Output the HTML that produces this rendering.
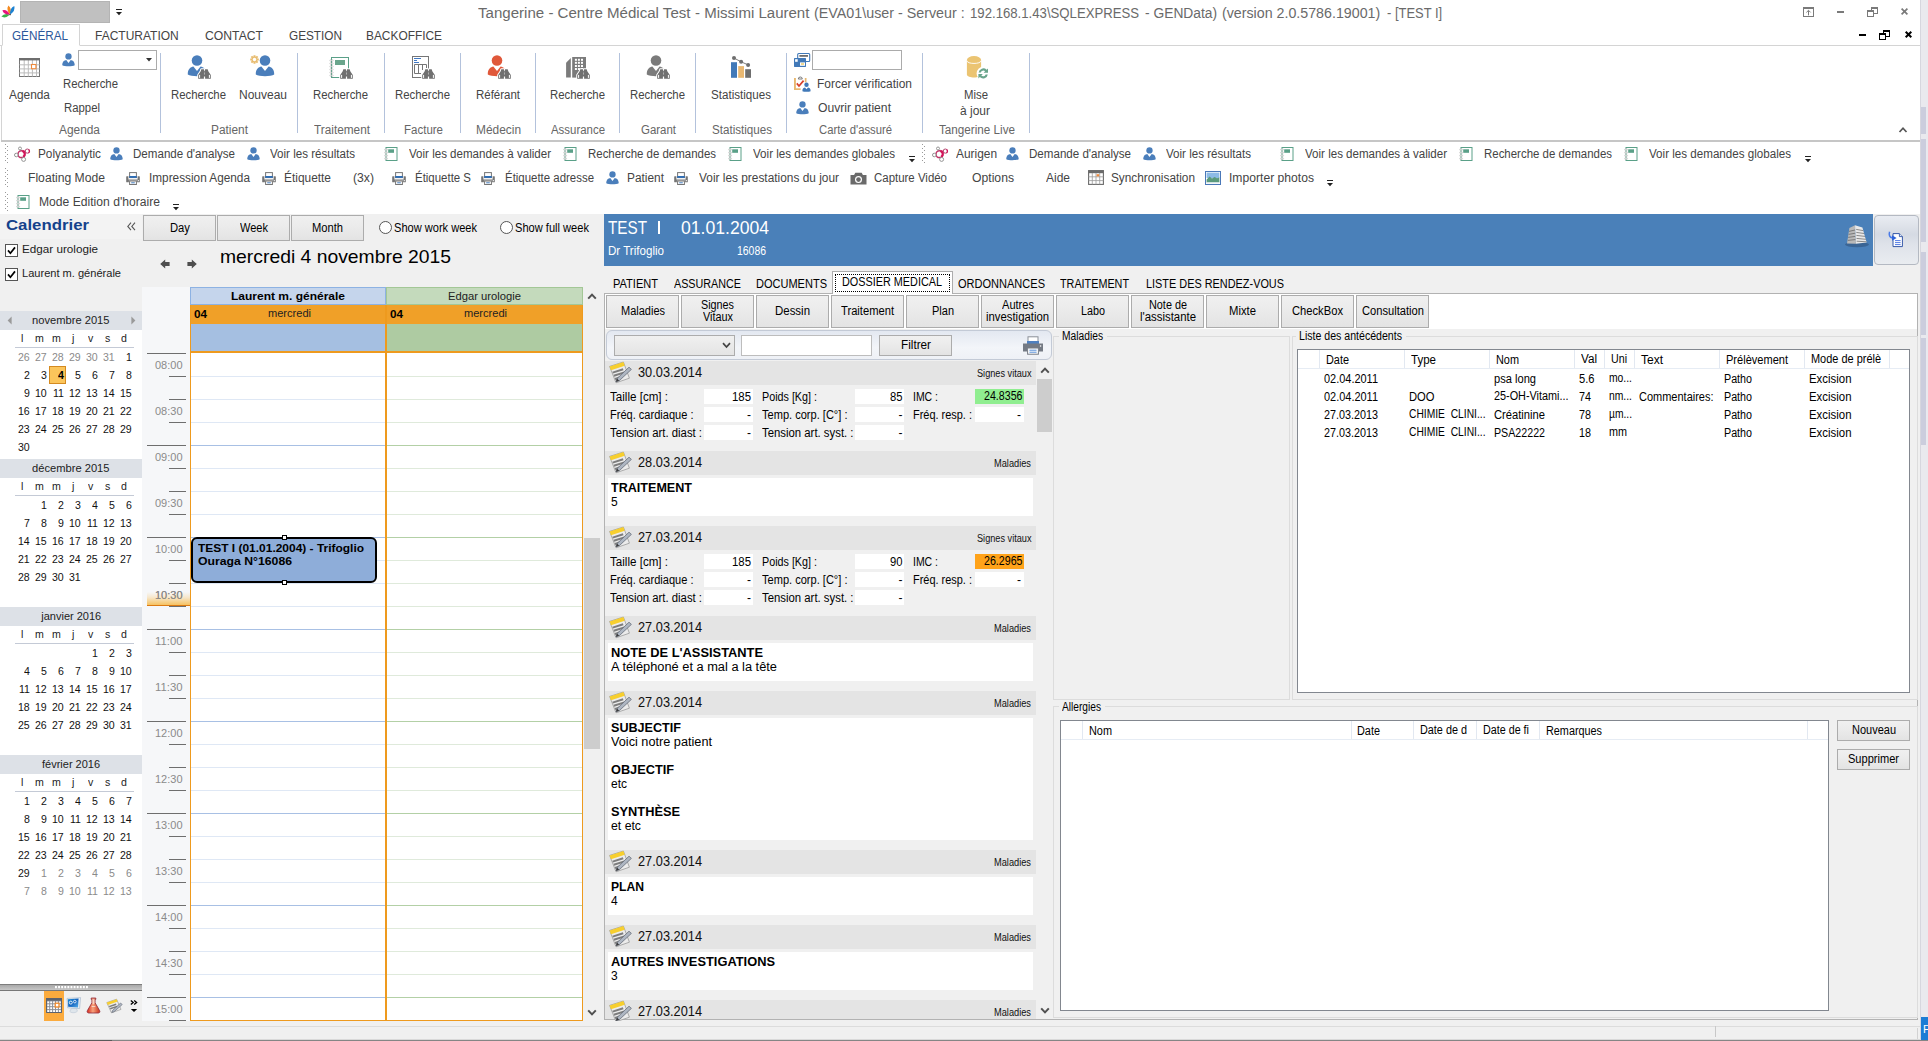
<!DOCTYPE html>
<html><head><meta charset="utf-8"><title>Tangerine</title>
<style>
html,body{margin:0;padding:0;}
body{width:1928px;height:1041px;overflow:hidden;position:relative;background:#fff;font-family:"Liberation Sans",sans-serif;}
div,svg,span.t{position:absolute;}
span.t{white-space:pre;display:block;transform-origin:0 50%;}
svg{overflow:visible;}
</style></head><body>
<div style="left:0px;top:0px;width:1920px;height:214px;background:#fff;"></div><svg style="left:1px;top:4px;" width="14" height="14" viewBox="0 0 14 14"><path d="M9.1 10.6Q2.99 8.72 0.4 12.6Q4.42 14.96 9.1 10.6Z" fill="#3cb44a"/><path d="M9.1 10.6Q6.01 4.92 1.4 6.2Q2.64 10.82 9.1 10.6Z" fill="#e8127c"/><path d="M9.1 10.6Q11.19 4.31 7.4 1.4Q4.90 5.48 9.1 10.6Z" fill="#f58a1f"/><path d="M9.1 10.6Q14.67 6.72 13.3 2.0Q8.74 3.82 9.1 10.6Z" fill="#1d82d2"/><circle cx="9.1" cy="10.6" r="0.8" fill="#444"/></svg><div style="left:20px;top:1px;width:90px;height:22px;background:#c0c0c0;border:1px solid #b4b4b4;box-sizing:border-box;"></div><svg style="left:115px;top:9px;" width="8" height="8" viewBox="0 0 8 8"><rect x="1" y="0" width="6" height="1" fill="#222"/><path d="M1 3h6l-3 3.2z" fill="#222"/></svg><span class="t" style="left:478.10px;top:3px;font-size:15.5px;line-height:19px;color:#6a6a6a;transform:scaleX(0.9723);">Tangerine - Centre Médical Test</span><span class="t" style="left:694.90px;top:3px;font-size:15.5px;line-height:19px;color:#6a6a6a;transform:scaleX(0.9695);">- Missimi Laurent</span><span class="t" style="left:814.30px;top:3px;font-size:15.5px;line-height:19px;color:#6a6a6a;transform:scaleX(0.9224);">(EVA01\user - Serveur :</span><span class="t" style="left:970.20px;top:3px;font-size:15.5px;line-height:19px;color:#6a6a6a;transform:scaleX(0.8495);">192.168.1.43\SQLEXPRESS</span><span class="t" style="left:1145.00px;top:3px;font-size:15.5px;line-height:19px;color:#6a6a6a;transform:scaleX(0.8907);">- GENData)</span><span class="t" style="left:1222.30px;top:3px;font-size:15.5px;line-height:19px;color:#6a6a6a;transform:scaleX(0.9179);">(version 2.0.5786.19001)</span><span class="t" style="left:1387.00px;top:3px;font-size:15.5px;line-height:19px;color:#6a6a6a;transform:scaleX(0.8360);">- [TEST I]</span><div style="left:1803px;top:7px;width:11px;height:10px;border:1px solid #7a7a7a;box-sizing:border-box;border-top:2px solid #7a7a7a;"></div><svg style="left:1805px;top:9px;" width="7" height="7" viewBox="0 0 7 7"><path d="M3.5 6.4V1.6M1.4 3.4L3.5 1.3L5.6 3.4" fill="none" stroke="#7a7a7a" stroke-width="1"/></svg><div style="left:1837px;top:11px;width:7px;height:2px;background:#7a7a7a;"></div><div style="left:1871px;top:7px;width:7px;height:7px;border:1px solid #7a7a7a;box-sizing:border-box;border-top:2px solid #7a7a7a;"></div><div style="left:1867px;top:10px;width:7px;height:7px;background:#fff;border:1px solid #7a7a7a;box-sizing:border-box;border-top:2px solid #7a7a7a;"></div><svg style="left:1901px;top:8px;" width="7" height="7" viewBox="0 0 7 7"><path d="M0.6 0.6L6.4 6.4M6.4 0.6L0.6 6.4" stroke="#7a7a7a" stroke-width="1.7"/></svg><div style="left:1859px;top:34px;width:7px;height:2px;background:#000;"></div><div style="left:1883px;top:30px;width:7px;height:7px;border:1px solid #000;box-sizing:border-box;border-top:2px solid #000;"></div><div style="left:1879px;top:33px;width:7px;height:7px;background:#fff;border:1px solid #000;box-sizing:border-box;border-top:2px solid #000;"></div><svg style="left:1905px;top:31px;" width="7" height="7" viewBox="0 0 7 7"><path d="M0.7 0.7L6.3 6.3M6.3 0.7L0.7 6.3" stroke="#000" stroke-width="2"/></svg><div style="left:0px;top:45px;width:1920px;height:1px;background:#d4d4d4;"></div><div style="left:2px;top:24px;width:78px;height:22px;background:#fff;border:1px solid #d4d4d4;border-bottom:1px solid #fff;box-sizing:border-box;"></div><span class="t" style="left:12.00px;top:28px;font-size:12px;line-height:16px;color:#2b579a;transform:scaleX(0.9765);">GÉNÉRAL</span><span class="t" style="left:95.00px;top:28px;font-size:12px;line-height:16px;color:#444;">FACTURATION</span><span class="t" style="left:205.00px;top:28px;font-size:12px;line-height:16px;color:#444;transform:scaleX(1.0158);">CONTACT</span><span class="t" style="left:289.00px;top:28px;font-size:12px;line-height:16px;color:#444;transform:scaleX(0.9815);">GESTION</span><span class="t" style="left:366.00px;top:28px;font-size:12px;line-height:16px;color:#444;transform:scaleX(0.9912);">BACKOFFICE</span><div style="left:1px;top:46px;width:1px;height:95px;background:#d4d4d4;"></div><div style="left:1px;top:140px;width:1919px;height:2px;background:#c6c6c6;"></div><svg style="left:1898px;top:126px;" width="10" height="8" viewBox="0 0 10 8"><path d="M1.5 6L5 2.2L8.5 6" fill="none" stroke="#555" stroke-width="1.7"/></svg><div style="left:160px;top:53px;width:1px;height:80px;background:#b3c2dc;"></div><div style="left:297px;top:53px;width:1px;height:80px;background:#b3c2dc;"></div><div style="left:384px;top:53px;width:1px;height:80px;background:#b3c2dc;"></div><div style="left:460px;top:53px;width:1px;height:80px;background:#b3c2dc;"></div><div style="left:535px;top:53px;width:1px;height:80px;background:#b3c2dc;"></div><div style="left:619px;top:53px;width:1px;height:80px;background:#b3c2dc;"></div><div style="left:695px;top:53px;width:1px;height:80px;background:#b3c2dc;"></div><div style="left:786px;top:53px;width:1px;height:80px;background:#b3c2dc;"></div><div style="left:922px;top:53px;width:1px;height:80px;background:#b3c2dc;"></div><div style="left:1029px;top:53px;width:1px;height:80px;background:#b3c2dc;"></div><svg style="left:19px;top:58px;" width="21" height="19" viewBox="0 0 21 19"><rect x="0.5" y="0.5" width="20" height="18" fill="#fff" stroke="#767676" stroke-width="1"/><rect x="4.7" y="2" width="1" height="16.5" fill="#bcbcbc"/><rect x="8.8" y="2" width="1" height="16.5" fill="#bcbcbc"/><rect x="12.9" y="2" width="1" height="16.5" fill="#bcbcbc"/><rect x="17.0" y="2" width="1" height="16.5" fill="#bcbcbc"/><rect x="0.5" y="6.3" width="20" height="1" fill="#bcbcbc"/><rect x="0.5" y="10.4" width="20" height="1" fill="#bcbcbc"/><rect x="0.5" y="14.4" width="20" height="1" fill="#bcbcbc"/><rect x="0" y="0" width="21" height="2.4" fill="#6e6e6e"/><rect x="12.5" y="6.5" width="4.4" height="4.2" fill="#fff" stroke="#f08a3c" stroke-width="1.1"/></svg><span class="t" style="left:9.00px;top:87px;font-size:12.5px;line-height:16px;color:#444;transform:scaleX(0.9507);">Agenda</span><svg style="left:61.5px;top:53px;" width="13" height="14" viewBox="0 0 14 15"><circle cx="7" cy="3.6" r="3.4" fill="#4a7ebb"/><path d="M0.3 13.2 C0.3 9.2 2.6 7.6 4.6 7.4 L7 10.6 L9.4 7.4 C11.4 7.6 13.7 9.2 13.7 13.2 C11.5 14.6 2.5 14.6 0.3 13.2 Z" fill="#4a7ebb"/></svg><div style="left:78px;top:50px;width:79px;height:20px;background:#fff;border:1px solid #ababab;box-sizing:border-box;"></div><svg style="left:146px;top:58px;" width="6" height="4" viewBox="0 0 6 4"><path d="M0 0h6L3 3.6z" fill="#333"/></svg><span class="t" style="left:63.00px;top:76px;font-size:12.5px;line-height:16px;color:#444;transform:scaleX(0.9098);">Recherche</span><span class="t" style="left:64.00px;top:100px;font-size:12.5px;line-height:16px;color:#444;transform:scaleX(0.9091);">Rappel</span><span class="t" style="left:59.00px;top:122px;font-size:12.5px;line-height:16px;color:#666;transform:scaleX(0.9507);">Agenda</span><svg style="left:187px;top:55px;" width="20" height="22" viewBox="0 0 20 22"><circle cx="10" cy="5.5" r="5.3" fill="#4a7ebb"/><path d="M0.8 19.6 C0.6 14 3.6 11.8 6.4 11.4 L10 16 L13.6 11.4 C16.4 11.8 19.4 14 19.2 19.6 C16 21.8 4 21.8 0.8 19.6 Z" fill="#4a7ebb"/></svg><svg style="left:198px;top:69px;" width="13" height="10" viewBox="0 0 13 10"><path d="M0.2 9.8V6L2.7 2.2L3.3 0.3H5.9L6.3 2.2H6.7L7.1 0.3H9.7L10.3 2.2L12.8 6V9.8H7.1V7.6H5.9V9.8Z" fill="#fff" stroke="#fff" stroke-width="2" stroke-linejoin="round"/><path d="M0.2 9.8V6L2.7 2.2L3.3 0.3H5.9L6.3 2.2H6.7L7.1 0.3H9.7L10.3 2.2L12.8 6V9.8H7.1V7.6H5.9V9.8Z" fill="#707070"/><rect x="1.1" y="5.9" width="1" height="3" fill="#fff"/><rect x="10.9" y="5.9" width="1" height="3" fill="#fff"/><rect x="6.1" y="3.4" width="0.8" height="2.2" fill="#fff" opacity=".55"/></svg><span class="t" style="left:171.00px;top:87px;font-size:12.5px;line-height:16px;color:#444;transform:scaleX(0.9098);">Recherche</span><svg style="left:255px;top:55px;" width="20" height="22" viewBox="0 0 20 22"><circle cx="10" cy="5.5" r="5.3" fill="#4a7ebb"/><path d="M0.8 19.6 C0.6 14 3.6 11.8 6.4 11.4 L10 16 L13.6 11.4 C16.4 11.8 19.4 14 19.2 19.6 C16 21.8 4 21.8 0.8 19.6 Z" fill="#4a7ebb"/></svg><svg style="left:250.4px;top:55px;" width="9" height="9" viewBox="0 0 9 9"><path d="M4.5 0.2V8.8M0.2 4.5H8.8M1.4 1.4L7.6 7.6M7.6 1.4L1.4 7.6" stroke="#e8bd72" stroke-width="2"/><circle cx="4.5" cy="4.5" r="2.9" fill="#e8bd72"/><circle cx="4.5" cy="4.5" r="1.7" fill="#fff"/></svg><span class="t" style="left:239.00px;top:87px;font-size:12.5px;line-height:16px;color:#444;transform:scaleX(0.9595);">Nouveau</span><span class="t" style="left:211.00px;top:122px;font-size:12.5px;line-height:16px;color:#666;transform:scaleX(0.9505);">Patient</span><svg style="left:330px;top:56px;" width="20" height="23" viewBox="0 0 20 23"><rect x="1.5" y="1.5" width="17" height="20" fill="#fff" stroke="#5aa088" stroke-width="1"/><rect x="5" y="4" width="10" height="5" fill="#6aa58c"/><g fill="#fff" stroke="#b8b8b8" stroke-width="0.6"><circle cx="0.6" cy="4.5" r="0.8"/><circle cx="2.4" cy="4.5" r="0.8"/><circle cx="0.6" cy="7.5" r="0.8"/><circle cx="2.4" cy="7.5" r="0.8"/><circle cx="0.6" cy="10.5" r="0.8"/><circle cx="2.4" cy="10.5" r="0.8"/><circle cx="0.6" cy="13.5" r="0.8"/><circle cx="2.4" cy="13.5" r="0.8"/><circle cx="0.6" cy="16.5" r="0.8"/><circle cx="2.4" cy="16.5" r="0.8"/><circle cx="0.6" cy="19.5" r="0.8"/><circle cx="2.4" cy="19.5" r="0.8"/></g></svg><svg style="left:340px;top:69px;" width="13" height="10" viewBox="0 0 13 10"><path d="M0.2 9.8V6L2.7 2.2L3.3 0.3H5.9L6.3 2.2H6.7L7.1 0.3H9.7L10.3 2.2L12.8 6V9.8H7.1V7.6H5.9V9.8Z" fill="#fff" stroke="#fff" stroke-width="2" stroke-linejoin="round"/><path d="M0.2 9.8V6L2.7 2.2L3.3 0.3H5.9L6.3 2.2H6.7L7.1 0.3H9.7L10.3 2.2L12.8 6V9.8H7.1V7.6H5.9V9.8Z" fill="#707070"/><rect x="1.1" y="5.9" width="1" height="3" fill="#fff"/><rect x="10.9" y="5.9" width="1" height="3" fill="#fff"/><rect x="6.1" y="3.4" width="0.8" height="2.2" fill="#fff" opacity=".55"/></svg><span class="t" style="left:313.00px;top:87px;font-size:12.5px;line-height:16px;color:#444;transform:scaleX(0.9098);">Recherche</span><span class="t" style="left:314.00px;top:122px;font-size:12.5px;line-height:16px;color:#666;transform:scaleX(0.9447);">Traitement</span><svg style="left:412px;top:55px;" width="18" height="24" viewBox="0 0 18 24"><rect x="0.5" y="1.5" width="16" height="21" fill="#fff" stroke="#767676" stroke-width="1"/><path d="M2 3.5h7M2 5.5h3M2 7.5h5" stroke="#3f78c4" stroke-width="1"/><path d="M2.5 18.5V9.5H14.5V13M6.5 9.5V18.5M10.5 9.5V15M2.5 18.5H9" fill="none" stroke="#767676" stroke-width="1"/></svg><svg style="left:422px;top:69px;" width="13" height="10" viewBox="0 0 13 10"><path d="M0.2 9.8V6L2.7 2.2L3.3 0.3H5.9L6.3 2.2H6.7L7.1 0.3H9.7L10.3 2.2L12.8 6V9.8H7.1V7.6H5.9V9.8Z" fill="#fff" stroke="#fff" stroke-width="2" stroke-linejoin="round"/><path d="M0.2 9.8V6L2.7 2.2L3.3 0.3H5.9L6.3 2.2H6.7L7.1 0.3H9.7L10.3 2.2L12.8 6V9.8H7.1V7.6H5.9V9.8Z" fill="#707070"/><rect x="1.1" y="5.9" width="1" height="3" fill="#fff"/><rect x="10.9" y="5.9" width="1" height="3" fill="#fff"/><rect x="6.1" y="3.4" width="0.8" height="2.2" fill="#fff" opacity=".55"/></svg><span class="t" style="left:395.00px;top:87px;font-size:12.5px;line-height:16px;color:#444;transform:scaleX(0.9098);">Recherche</span><span class="t" style="left:404.00px;top:122px;font-size:12.5px;line-height:16px;color:#666;transform:scaleX(0.9204);">Facture</span><svg style="left:487px;top:55px;" width="20" height="22" viewBox="0 0 20 22"><circle cx="10" cy="5.5" r="5.3" fill="#e0583a"/><path d="M0.8 19.6 C0.6 14 3.6 11.8 6.4 11.4 L10 16 L13.6 11.4 C16.4 11.8 19.4 14 19.2 19.6 C16 21.8 4 21.8 0.8 19.6 Z" fill="#e0583a"/></svg><svg style="left:498px;top:69px;" width="13" height="10" viewBox="0 0 13 10"><path d="M0.2 9.8V6L2.7 2.2L3.3 0.3H5.9L6.3 2.2H6.7L7.1 0.3H9.7L10.3 2.2L12.8 6V9.8H7.1V7.6H5.9V9.8Z" fill="#fff" stroke="#fff" stroke-width="2" stroke-linejoin="round"/><path d="M0.2 9.8V6L2.7 2.2L3.3 0.3H5.9L6.3 2.2H6.7L7.1 0.3H9.7L10.3 2.2L12.8 6V9.8H7.1V7.6H5.9V9.8Z" fill="#707070"/><rect x="1.1" y="5.9" width="1" height="3" fill="#fff"/><rect x="10.9" y="5.9" width="1" height="3" fill="#fff"/><rect x="6.1" y="3.4" width="0.8" height="2.2" fill="#fff" opacity=".55"/></svg><span class="t" style="left:476.00px;top:87px;font-size:12.5px;line-height:16px;color:#444;transform:scaleX(0.9176);">Référant</span><span class="t" style="left:476.00px;top:122px;font-size:12.5px;line-height:16px;color:#666;transform:scaleX(0.9524);">Médecin</span><svg style="left:565px;top:56px;" width="22" height="22" viewBox="0 0 22 22"><path d="M1.1 6.8L5.8 2.1V21.6H1.1Z" fill="#7b7b7b"/><rect x="7.2" y="1" width="13.8" height="20.6" fill="#7b7b7b"/><rect x="9.9" y="2.8" width="2" height="2" fill="#fff"/><rect x="9.9" y="5.8" width="2" height="2" fill="#fff"/><rect x="9.9" y="9" width="2" height="2" fill="#fff"/><rect x="9.9" y="12" width="2" height="2" fill="#fff"/><rect x="12.9" y="2.8" width="2" height="2" fill="#fff"/><rect x="12.9" y="5.8" width="2" height="2" fill="#fff"/><rect x="12.9" y="9" width="2" height="2" fill="#fff"/><rect x="12.9" y="12" width="2" height="2" fill="#fff"/><rect x="16" y="2.8" width="2" height="2" fill="#fff"/><rect x="16" y="5.8" width="2" height="2" fill="#fff"/><rect x="16" y="9" width="2" height="2" fill="#fff"/><rect x="16" y="12" width="2" height="2" fill="#fff"/></svg><svg style="left:577px;top:69px;" width="13" height="10" viewBox="0 0 13 10"><path d="M0.2 9.8V6L2.7 2.2L3.3 0.3H5.9L6.3 2.2H6.7L7.1 0.3H9.7L10.3 2.2L12.8 6V9.8H7.1V7.6H5.9V9.8Z" fill="#fff" stroke="#fff" stroke-width="2" stroke-linejoin="round"/><path d="M0.2 9.8V6L2.7 2.2L3.3 0.3H5.9L6.3 2.2H6.7L7.1 0.3H9.7L10.3 2.2L12.8 6V9.8H7.1V7.6H5.9V9.8Z" fill="#707070"/><rect x="1.1" y="5.9" width="1" height="3" fill="#fff"/><rect x="10.9" y="5.9" width="1" height="3" fill="#fff"/><rect x="6.1" y="3.4" width="0.8" height="2.2" fill="#fff" opacity=".55"/></svg><span class="t" style="left:550.00px;top:87px;font-size:12.5px;line-height:16px;color:#444;transform:scaleX(0.9098);">Recherche</span><span class="t" style="left:551.00px;top:122px;font-size:12.5px;line-height:16px;color:#666;transform:scaleX(0.9145);">Assurance</span><svg style="left:646px;top:55px;" width="20" height="22" viewBox="0 0 20 22"><circle cx="10" cy="5.5" r="5.3" fill="#7b7b7b"/><path d="M0.8 19.6 C0.6 14 3.6 11.8 6.4 11.4 L10 16 L13.6 11.4 C16.4 11.8 19.4 14 19.2 19.6 C16 21.8 4 21.8 0.8 19.6 Z" fill="#7b7b7b"/></svg><svg style="left:657px;top:69px;" width="13" height="10" viewBox="0 0 13 10"><path d="M0.2 9.8V6L2.7 2.2L3.3 0.3H5.9L6.3 2.2H6.7L7.1 0.3H9.7L10.3 2.2L12.8 6V9.8H7.1V7.6H5.9V9.8Z" fill="#fff" stroke="#fff" stroke-width="2" stroke-linejoin="round"/><path d="M0.2 9.8V6L2.7 2.2L3.3 0.3H5.9L6.3 2.2H6.7L7.1 0.3H9.7L10.3 2.2L12.8 6V9.8H7.1V7.6H5.9V9.8Z" fill="#707070"/><rect x="1.1" y="5.9" width="1" height="3" fill="#fff"/><rect x="10.9" y="5.9" width="1" height="3" fill="#fff"/><rect x="6.1" y="3.4" width="0.8" height="2.2" fill="#fff" opacity=".55"/></svg><span class="t" style="left:630.00px;top:87px;font-size:12.5px;line-height:16px;color:#444;transform:scaleX(0.9098);">Recherche</span><span class="t" style="left:641.00px;top:122px;font-size:12.5px;line-height:16px;color:#666;transform:scaleX(0.9156);">Garant</span><svg style="left:730px;top:55px;" width="22" height="23" viewBox="0 0 22 23"><rect x="1" y="7.2" width="6" height="15.6" fill="#4179b8"/><rect x="8.2" y="11.1" width="5.8" height="11.7" fill="#e9b872"/><rect x="15.2" y="14.2" width="5.8" height="8.6" fill="#6e6e6e"/><path d="M4 3L11.1 6.8L18.1 9.9" fill="none" stroke="#6e6e6e" stroke-width="0.9"/><circle cx="4" cy="3" r="2" fill="#6e6e6e"/><circle cx="11.1" cy="6.8" r="2" fill="#6e6e6e"/><circle cx="18.1" cy="9.9" r="2" fill="#6e6e6e"/></svg><span class="t" style="left:711.00px;top:87px;font-size:12.5px;line-height:16px;color:#444;transform:scaleX(0.9284);">Statistiques</span><span class="t" style="left:712.00px;top:122px;font-size:12.5px;line-height:16px;color:#666;transform:scaleX(0.9284);">Statistiques</span><svg style="left:794px;top:52px;" width="17" height="15" viewBox="0 0 17 15"><rect x="3.7" y="1.5" width="12" height="8" rx="1" fill="#fff" stroke="#4179b8" stroke-width="1.1"/><rect x="5.4" y="3" width="8.6" height="1.8" fill="#6e6e6e"/><rect x="0" y="6.1" width="12" height="8.8" rx="0.6" fill="#4179b8"/><rect x="1.1" y="7.2" width="2.6" height="2.6" fill="#fff"/><rect x="6" y="10.4" width="5" height="3.4" fill="#fff"/><rect x="7" y="11.4" width="3" height="1.2" fill="#e9c14a"/></svg><div style="left:812px;top:50px;width:90px;height:20px;background:#fff;border:1px solid #ababab;box-sizing:border-box;"></div><svg style="left:794px;top:76px;" width="17" height="16" viewBox="0 0 17 16"><rect x="0" y="2" width="1.9" height="12" fill="#e8b870"/><rect x="0" y="12.3" width="6.6" height="1.7" fill="#e8b870"/><rect x="10.8" y="2" width="1.7" height="4.4" fill="#e8b870"/><path d="M4.3 3A2 2 0 0 1 8.3 3Z" fill="#fff" stroke="#7a7a7a" stroke-width="1"/><path d="M2.8 7.4L5 10L9.6 4.6" fill="none" stroke="#d8402a" stroke-width="1.7"/><circle cx="12.5" cy="8.8" r="2.2" fill="#4179b8"/><path d="M8.4 15.2C8.2 12.4 10 11.6 11 11.6L12.5 13.2L14 11.6C15 11.6 16.8 12.4 16.6 15.2C15 16 10 16 8.4 15.2Z" fill="#4179b8"/></svg><span class="t" style="left:817.00px;top:76px;font-size:12.5px;line-height:16px;color:#444;transform:scaleX(0.9565);">Forcer vérification</span><svg style="left:795.5px;top:101px;" width="13" height="14" viewBox="0 0 14 15"><circle cx="7" cy="3.6" r="3.4" fill="#4a7ebb"/><path d="M0.3 13.2 C0.3 9.2 2.6 7.6 4.6 7.4 L7 10.6 L9.4 7.4 C11.4 7.6 13.7 9.2 13.7 13.2 C11.5 14.6 2.5 14.6 0.3 13.2 Z" fill="#4a7ebb"/></svg><span class="t" style="left:818.00px;top:100px;font-size:12.5px;line-height:16px;color:#444;transform:scaleX(0.9730);">Ouvrir patient</span><span class="t" style="left:819.00px;top:122px;font-size:12.5px;line-height:16px;color:#666;transform:scaleX(0.9023);">Carte d'assuré</span><svg style="left:966px;top:55px;" width="24" height="25" viewBox="0 0 24 25"><path d="M0.9 5V19.4C0.9 23.4 15.1 23.4 15.1 19.4V5Z" fill="#ebc472"/><ellipse cx="8" cy="5" rx="7.1" ry="3.9" fill="#ebc472"/><path d="M0.9 5.6C0.9 9.4 15.1 9.4 15.1 5.6" fill="none" stroke="#fff" stroke-width="0.9"/><circle cx="17.2" cy="18.4" r="6.6" fill="#fff"/><path d="M12.6 17.4a4.7 4.7 0 0 1 8-2.6l1.4-1.4v4.4h-4.4l1.5-1.5a2.6 2.6 0 0 0-4.3 1.1z" fill="#6aa58c"/><path d="M21.8 19.4a4.7 4.7 0 0 1-8 2.6l-1.4 1.4v-4.4h4.4l-1.5 1.5a2.6 2.6 0 0 0 4.3-1.1z" fill="#6aa58c"/></svg><span class="t" style="left:964.00px;top:87px;font-size:12.5px;line-height:16px;color:#444;transform:scaleX(0.9091);">Mise</span><span class="t" style="left:960.00px;top:103px;font-size:12.5px;line-height:16px;color:#444;transform:scaleX(0.9592);">à jour</span><span class="t" style="left:939.00px;top:122px;font-size:12.5px;line-height:16px;color:#666;transform:scaleX(0.9348);">Tangerine Live</span><svg style="left:5px;top:144px;" width="4" height="19" viewBox="0 0 4 19"><rect x="0" y="0" width="1" height="1" fill="#9a9a9a"/><rect x="2" y="2" width="1" height="1" fill="#9a9a9a"/><rect x="0" y="4" width="1" height="1" fill="#9a9a9a"/><rect x="2" y="6" width="1" height="1" fill="#9a9a9a"/><rect x="0" y="8" width="1" height="1" fill="#9a9a9a"/><rect x="2" y="10" width="1" height="1" fill="#9a9a9a"/><rect x="0" y="12" width="1" height="1" fill="#9a9a9a"/><rect x="2" y="14" width="1" height="1" fill="#9a9a9a"/><rect x="0" y="16" width="1" height="1" fill="#9a9a9a"/><rect x="2" y="18" width="1" height="1" fill="#9a9a9a"/></svg><svg style="left:14px;top:146px;" width="17" height="16" viewBox="0 0 17 16"><path d="M9.6 6.4L12 5.6" stroke="#d4145a" stroke-width="2.6"/><circle cx="7.4" cy="8.2" r="3.4" fill="#fff" stroke="#c2356a" stroke-width="1.5"/><path d="M8.4 4.9A3.4 3.4 0 0 1 9.2 11" fill="none" stroke="#d4145a" stroke-width="2.2"/><circle cx="6" cy="2.5" r="1.5" fill="#fff" stroke="#8a8a8a" stroke-width="0.9"/><circle cx="13.3" cy="5.1" r="2.1" fill="#fff" stroke="#b04a70" stroke-width="1"/><path d="M14.6 3.4A2.1 2.1 0 0 1 14.4 7" fill="none" stroke="#d4145a" stroke-width="1.2"/><circle cx="2.3" cy="9" r="1.8" fill="#fff" stroke="#8a8a8a" stroke-width="0.9"/><circle cx="9.6" cy="13.4" r="2" fill="#fff" stroke="#8a8a8a" stroke-width="0.9"/></svg><span class="t" style="left:38.00px;top:146px;font-size:12.5px;line-height:16px;color:#444;transform:scaleX(0.9445);">Polyanalytic</span><svg style="left:110px;top:146.5px;" width="13" height="14" viewBox="0 0 14 15"><circle cx="7" cy="3.6" r="3.4" fill="#4a7ebb"/><path d="M0.3 13.2 C0.3 9.2 2.6 7.6 4.6 7.4 L7 10.6 L9.4 7.4 C11.4 7.6 13.7 9.2 13.7 13.2 C11.5 14.6 2.5 14.6 0.3 13.2 Z" fill="#4a7ebb"/></svg><span class="t" style="left:133.00px;top:146px;font-size:12.5px;line-height:16px;color:#444;transform:scaleX(0.9264);">Demande d'analyse</span><svg style="left:247px;top:146.5px;" width="13" height="14" viewBox="0 0 14 15"><circle cx="7" cy="3.6" r="3.4" fill="#4a7ebb"/><path d="M0.3 13.2 C0.3 9.2 2.6 7.6 4.6 7.4 L7 10.6 L9.4 7.4 C11.4 7.6 13.7 9.2 13.7 13.2 C11.5 14.6 2.5 14.6 0.3 13.2 Z" fill="#4a7ebb"/></svg><span class="t" style="left:270.00px;top:146px;font-size:12.5px;line-height:16px;color:#444;transform:scaleX(0.9269);">Voir les résultats</span><svg style="left:385px;top:146px;" width="13" height="15" viewBox="0 0 13 15"><rect x="1" y="1.5" width="11" height="13" fill="#fff" stroke="#5aa088" stroke-width="1"/><rect x="3.2" y="3.3" width="5.8" height="3.5" fill="#5aa088"/><g fill="#fff" stroke="#bdbdbd" stroke-width="0.6"><circle cx="0.3" cy="3.6" r="0.7"/><circle cx="1.9" cy="3.6" r="0.7"/><circle cx="0.3" cy="6.6" r="0.7"/><circle cx="1.9" cy="6.6" r="0.7"/><circle cx="0.3" cy="9.6" r="0.7"/><circle cx="1.9" cy="9.6" r="0.7"/><circle cx="0.3" cy="12.6" r="0.7"/><circle cx="1.9" cy="12.6" r="0.7"/></g></svg><span class="t" style="left:409.00px;top:146px;font-size:12.5px;line-height:16px;color:#444;transform:scaleX(0.9248);">Voir les demandes à valider</span><svg style="left:564px;top:146px;" width="13" height="15" viewBox="0 0 13 15"><rect x="1" y="1.5" width="11" height="13" fill="#fff" stroke="#5aa088" stroke-width="1"/><rect x="3.2" y="3.3" width="5.8" height="3.5" fill="#5aa088"/><g fill="#fff" stroke="#bdbdbd" stroke-width="0.6"><circle cx="0.3" cy="3.6" r="0.7"/><circle cx="1.9" cy="3.6" r="0.7"/><circle cx="0.3" cy="6.6" r="0.7"/><circle cx="1.9" cy="6.6" r="0.7"/><circle cx="0.3" cy="9.6" r="0.7"/><circle cx="1.9" cy="9.6" r="0.7"/><circle cx="0.3" cy="12.6" r="0.7"/><circle cx="1.9" cy="12.6" r="0.7"/></g></svg><span class="t" style="left:588.00px;top:146px;font-size:12.5px;line-height:16px;color:#444;transform:scaleX(0.9164);">Recherche de demandes</span><svg style="left:729px;top:146px;" width="13" height="15" viewBox="0 0 13 15"><rect x="1" y="1.5" width="11" height="13" fill="#fff" stroke="#5aa088" stroke-width="1"/><rect x="3.2" y="3.3" width="5.8" height="3.5" fill="#5aa088"/><g fill="#fff" stroke="#bdbdbd" stroke-width="0.6"><circle cx="0.3" cy="3.6" r="0.7"/><circle cx="1.9" cy="3.6" r="0.7"/><circle cx="0.3" cy="6.6" r="0.7"/><circle cx="1.9" cy="6.6" r="0.7"/><circle cx="0.3" cy="9.6" r="0.7"/><circle cx="1.9" cy="9.6" r="0.7"/><circle cx="0.3" cy="12.6" r="0.7"/><circle cx="1.9" cy="12.6" r="0.7"/></g></svg><span class="t" style="left:753.00px;top:146px;font-size:12.5px;line-height:16px;color:#444;transform:scaleX(0.9289);">Voir les demandes globales</span><svg style="left:908px;top:156px;" width="8" height="8" viewBox="0 0 8 8"><rect x="1" y="0" width="6" height="1" fill="#222"/><path d="M1 3h6l-3 3.2z" fill="#222"/></svg><svg style="left:922px;top:144px;" width="4" height="19" viewBox="0 0 4 19"><rect x="0" y="0" width="1" height="1" fill="#9a9a9a"/><rect x="2" y="2" width="1" height="1" fill="#9a9a9a"/><rect x="0" y="4" width="1" height="1" fill="#9a9a9a"/><rect x="2" y="6" width="1" height="1" fill="#9a9a9a"/><rect x="0" y="8" width="1" height="1" fill="#9a9a9a"/><rect x="2" y="10" width="1" height="1" fill="#9a9a9a"/><rect x="0" y="12" width="1" height="1" fill="#9a9a9a"/><rect x="2" y="14" width="1" height="1" fill="#9a9a9a"/><rect x="0" y="16" width="1" height="1" fill="#9a9a9a"/><rect x="2" y="18" width="1" height="1" fill="#9a9a9a"/></svg><svg style="left:932px;top:146px;" width="17" height="16" viewBox="0 0 17 16"><path d="M9.6 6.4L12 5.6" stroke="#d4145a" stroke-width="2.6"/><circle cx="7.4" cy="8.2" r="3.4" fill="#fff" stroke="#c2356a" stroke-width="1.5"/><path d="M8.4 4.9A3.4 3.4 0 0 1 9.2 11" fill="none" stroke="#d4145a" stroke-width="2.2"/><circle cx="6" cy="2.5" r="1.5" fill="#fff" stroke="#8a8a8a" stroke-width="0.9"/><circle cx="13.3" cy="5.1" r="2.1" fill="#fff" stroke="#b04a70" stroke-width="1"/><path d="M14.6 3.4A2.1 2.1 0 0 1 14.4 7" fill="none" stroke="#d4145a" stroke-width="1.2"/><circle cx="2.3" cy="9" r="1.8" fill="#fff" stroke="#8a8a8a" stroke-width="0.9"/><circle cx="9.6" cy="13.4" r="2" fill="#fff" stroke="#8a8a8a" stroke-width="0.9"/></svg><span class="t" style="left:956.00px;top:146px;font-size:12.5px;line-height:16px;color:#444;transform:scaleX(0.9518);">Aurigen</span><svg style="left:1006px;top:146.5px;" width="13" height="14" viewBox="0 0 14 15"><circle cx="7" cy="3.6" r="3.4" fill="#4a7ebb"/><path d="M0.3 13.2 C0.3 9.2 2.6 7.6 4.6 7.4 L7 10.6 L9.4 7.4 C11.4 7.6 13.7 9.2 13.7 13.2 C11.5 14.6 2.5 14.6 0.3 13.2 Z" fill="#4a7ebb"/></svg><span class="t" style="left:1029.00px;top:146px;font-size:12.5px;line-height:16px;color:#444;transform:scaleX(0.9264);">Demande d'analyse</span><svg style="left:1143px;top:146.5px;" width="13" height="14" viewBox="0 0 14 15"><circle cx="7" cy="3.6" r="3.4" fill="#4a7ebb"/><path d="M0.3 13.2 C0.3 9.2 2.6 7.6 4.6 7.4 L7 10.6 L9.4 7.4 C11.4 7.6 13.7 9.2 13.7 13.2 C11.5 14.6 2.5 14.6 0.3 13.2 Z" fill="#4a7ebb"/></svg><span class="t" style="left:1166.00px;top:146px;font-size:12.5px;line-height:16px;color:#444;transform:scaleX(0.9269);">Voir les résultats</span><svg style="left:1281px;top:146px;" width="13" height="15" viewBox="0 0 13 15"><rect x="1" y="1.5" width="11" height="13" fill="#fff" stroke="#5aa088" stroke-width="1"/><rect x="3.2" y="3.3" width="5.8" height="3.5" fill="#5aa088"/><g fill="#fff" stroke="#bdbdbd" stroke-width="0.6"><circle cx="0.3" cy="3.6" r="0.7"/><circle cx="1.9" cy="3.6" r="0.7"/><circle cx="0.3" cy="6.6" r="0.7"/><circle cx="1.9" cy="6.6" r="0.7"/><circle cx="0.3" cy="9.6" r="0.7"/><circle cx="1.9" cy="9.6" r="0.7"/><circle cx="0.3" cy="12.6" r="0.7"/><circle cx="1.9" cy="12.6" r="0.7"/></g></svg><span class="t" style="left:1305.00px;top:146px;font-size:12.5px;line-height:16px;color:#444;transform:scaleX(0.9248);">Voir les demandes à valider</span><svg style="left:1460px;top:146px;" width="13" height="15" viewBox="0 0 13 15"><rect x="1" y="1.5" width="11" height="13" fill="#fff" stroke="#5aa088" stroke-width="1"/><rect x="3.2" y="3.3" width="5.8" height="3.5" fill="#5aa088"/><g fill="#fff" stroke="#bdbdbd" stroke-width="0.6"><circle cx="0.3" cy="3.6" r="0.7"/><circle cx="1.9" cy="3.6" r="0.7"/><circle cx="0.3" cy="6.6" r="0.7"/><circle cx="1.9" cy="6.6" r="0.7"/><circle cx="0.3" cy="9.6" r="0.7"/><circle cx="1.9" cy="9.6" r="0.7"/><circle cx="0.3" cy="12.6" r="0.7"/><circle cx="1.9" cy="12.6" r="0.7"/></g></svg><span class="t" style="left:1484.00px;top:146px;font-size:12.5px;line-height:16px;color:#444;transform:scaleX(0.9164);">Recherche de demandes</span><svg style="left:1625px;top:146px;" width="13" height="15" viewBox="0 0 13 15"><rect x="1" y="1.5" width="11" height="13" fill="#fff" stroke="#5aa088" stroke-width="1"/><rect x="3.2" y="3.3" width="5.8" height="3.5" fill="#5aa088"/><g fill="#fff" stroke="#bdbdbd" stroke-width="0.6"><circle cx="0.3" cy="3.6" r="0.7"/><circle cx="1.9" cy="3.6" r="0.7"/><circle cx="0.3" cy="6.6" r="0.7"/><circle cx="1.9" cy="6.6" r="0.7"/><circle cx="0.3" cy="9.6" r="0.7"/><circle cx="1.9" cy="9.6" r="0.7"/><circle cx="0.3" cy="12.6" r="0.7"/><circle cx="1.9" cy="12.6" r="0.7"/></g></svg><span class="t" style="left:1649.00px;top:146px;font-size:12.5px;line-height:16px;color:#444;transform:scaleX(0.9289);">Voir les demandes globales</span><svg style="left:1804px;top:156px;" width="8" height="8" viewBox="0 0 8 8"><rect x="1" y="0" width="6" height="1" fill="#222"/><path d="M1 3h6l-3 3.2z" fill="#222"/></svg><svg style="left:5px;top:168px;" width="4" height="19" viewBox="0 0 4 19"><rect x="0" y="0" width="1" height="1" fill="#9a9a9a"/><rect x="2" y="2" width="1" height="1" fill="#9a9a9a"/><rect x="0" y="4" width="1" height="1" fill="#9a9a9a"/><rect x="2" y="6" width="1" height="1" fill="#9a9a9a"/><rect x="0" y="8" width="1" height="1" fill="#9a9a9a"/><rect x="2" y="10" width="1" height="1" fill="#9a9a9a"/><rect x="0" y="12" width="1" height="1" fill="#9a9a9a"/><rect x="2" y="14" width="1" height="1" fill="#9a9a9a"/><rect x="0" y="16" width="1" height="1" fill="#9a9a9a"/><rect x="2" y="18" width="1" height="1" fill="#9a9a9a"/></svg><span class="t" style="left:28.00px;top:170px;font-size:12.5px;line-height:16px;color:#444;transform:scaleX(0.9722);">Floating Mode</span><svg style="left:126px;top:172px;" width="14" height="13" viewBox="0 0 14 13"><path d="M0.7 4.3h1.7v3.1h9.2v-3.1h1.7a.5 .5 0 0 1 .5 .5v4.9a.5 .5 0 0 1-.5 .5h-2.2v-1.6h-8.2v1.6h-2.2a.5 .5 0 0 1-.5-.5v-4.9a.5 .5 0 0 1 .5-.5z" fill="#757575"/><rect x="3.6" y="0.6" width="6.8" height="5" fill="#fff" stroke="#757575" stroke-width="1"/><rect x="3.2" y="4" width="7.6" height="1.9" fill="#2e6db5"/><rect x="3.6" y="9" width="6.8" height="3.5" fill="#fff" stroke="#757575" stroke-width="1"/><path d="M5.2 10.8h3.6" stroke="#2e6db5" stroke-width="0.9"/><circle cx="12.3" cy="8.7" r="0.65" fill="#fff"/></svg><span class="t" style="left:149.00px;top:170px;font-size:12.5px;line-height:16px;color:#444;transform:scaleX(0.9437);">Impression Agenda</span><svg style="left:262px;top:172px;" width="14" height="13" viewBox="0 0 14 13"><path d="M0.7 4.3h1.7v3.1h9.2v-3.1h1.7a.5 .5 0 0 1 .5 .5v4.9a.5 .5 0 0 1-.5 .5h-2.2v-1.6h-8.2v1.6h-2.2a.5 .5 0 0 1-.5-.5v-4.9a.5 .5 0 0 1 .5-.5z" fill="#757575"/><rect x="3.6" y="0.6" width="6.8" height="5" fill="#fff" stroke="#757575" stroke-width="1"/><rect x="3.2" y="4" width="7.6" height="1.9" fill="#2e6db5"/><rect x="3.6" y="9" width="6.8" height="3.5" fill="#fff" stroke="#757575" stroke-width="1"/><path d="M5.2 10.8h3.6" stroke="#2e6db5" stroke-width="0.9"/><circle cx="12.3" cy="8.7" r="0.65" fill="#fff"/></svg><span class="t" style="left:284.00px;top:170px;font-size:12.5px;line-height:16px;color:#444;transform:scaleX(0.9524);">Étiquette</span><span class="t" style="left:353.00px;top:170px;font-size:12.5px;line-height:16px;color:#444;transform:scaleX(0.9756);">(3x)</span><svg style="left:392px;top:172px;" width="14" height="13" viewBox="0 0 14 13"><path d="M0.7 4.3h1.7v3.1h9.2v-3.1h1.7a.5 .5 0 0 1 .5 .5v4.9a.5 .5 0 0 1-.5 .5h-2.2v-1.6h-8.2v1.6h-2.2a.5 .5 0 0 1-.5-.5v-4.9a.5 .5 0 0 1 .5-.5z" fill="#757575"/><rect x="3.6" y="0.6" width="6.8" height="5" fill="#fff" stroke="#757575" stroke-width="1"/><rect x="3.2" y="4" width="7.6" height="1.9" fill="#2e6db5"/><rect x="3.6" y="9" width="6.8" height="3.5" fill="#fff" stroke="#757575" stroke-width="1"/><path d="M5.2 10.8h3.6" stroke="#2e6db5" stroke-width="0.9"/><circle cx="12.3" cy="8.7" r="0.65" fill="#fff"/></svg><span class="t" style="left:415.00px;top:170px;font-size:12.5px;line-height:16px;color:#444;transform:scaleX(0.9158);">Étiquette S</span><svg style="left:481px;top:172px;" width="14" height="13" viewBox="0 0 14 13"><path d="M0.7 4.3h1.7v3.1h9.2v-3.1h1.7a.5 .5 0 0 1 .5 .5v4.9a.5 .5 0 0 1-.5 .5h-2.2v-1.6h-8.2v1.6h-2.2a.5 .5 0 0 1-.5-.5v-4.9a.5 .5 0 0 1 .5-.5z" fill="#757575"/><rect x="3.6" y="0.6" width="6.8" height="5" fill="#fff" stroke="#757575" stroke-width="1"/><rect x="3.2" y="4" width="7.6" height="1.9" fill="#2e6db5"/><rect x="3.6" y="9" width="6.8" height="3.5" fill="#fff" stroke="#757575" stroke-width="1"/><path d="M5.2 10.8h3.6" stroke="#2e6db5" stroke-width="0.9"/><circle cx="12.3" cy="8.7" r="0.65" fill="#fff"/></svg><span class="t" style="left:505.00px;top:170px;font-size:12.5px;line-height:16px;color:#444;transform:scaleX(0.9149);">Étiquette adresse</span><svg style="left:606px;top:170.5px;" width="13" height="14" viewBox="0 0 14 15"><circle cx="7" cy="3.6" r="3.4" fill="#4a7ebb"/><path d="M0.3 13.2 C0.3 9.2 2.6 7.6 4.6 7.4 L7 10.6 L9.4 7.4 C11.4 7.6 13.7 9.2 13.7 13.2 C11.5 14.6 2.5 14.6 0.3 13.2 Z" fill="#4a7ebb"/></svg><span class="t" style="left:627.00px;top:170px;font-size:12.5px;line-height:16px;color:#444;transform:scaleX(0.9505);">Patient</span><svg style="left:674px;top:172px;" width="14" height="13" viewBox="0 0 14 13"><path d="M0.7 4.3h1.7v3.1h9.2v-3.1h1.7a.5 .5 0 0 1 .5 .5v4.9a.5 .5 0 0 1-.5 .5h-2.2v-1.6h-8.2v1.6h-2.2a.5 .5 0 0 1-.5-.5v-4.9a.5 .5 0 0 1 .5-.5z" fill="#757575"/><rect x="3.6" y="0.6" width="6.8" height="5" fill="#fff" stroke="#757575" stroke-width="1"/><rect x="3.2" y="4" width="7.6" height="1.9" fill="#2e6db5"/><rect x="3.6" y="9" width="6.8" height="3.5" fill="#fff" stroke="#757575" stroke-width="1"/><path d="M5.2 10.8h3.6" stroke="#2e6db5" stroke-width="0.9"/><circle cx="12.3" cy="8.7" r="0.65" fill="#fff"/></svg><span class="t" style="left:699.00px;top:170px;font-size:12.5px;line-height:16px;color:#444;transform:scaleX(0.9504);">Voir les prestations du jour</span><svg style="left:850px;top:172px;" width="17" height="13" viewBox="0 0 17 13"><path d="M0.5 3 h3.6 l1.2-2.2 h6.4 l1.2 2.2 h3.6 v9.6 h-16 Z" fill="#6a6a6a"/><circle cx="8.5" cy="7.6" r="3.5" fill="#fff"/><circle cx="8.5" cy="7.6" r="2.3" fill="#6a6a6a"/></svg><span class="t" style="left:874.00px;top:170px;font-size:12.5px;line-height:16px;color:#444;transform:scaleX(0.9159);">Capture Vidéo</span><span class="t" style="left:972.00px;top:170px;font-size:12.5px;line-height:16px;color:#444;transform:scaleX(0.9750);">Options</span><span class="t" style="left:1046.00px;top:170px;font-size:12.5px;line-height:16px;color:#444;transform:scaleX(0.9590);">Aide</span><svg style="left:1088px;top:170px;" width="16" height="15" viewBox="0 0 16 15"><rect x="0.6" y="0.6" width="14.8" height="13.8" fill="#fff" stroke="#6a6a6a" stroke-width="1.1"/><rect x="0.6" y="0.6" width="14.8" height="2.6" fill="#6a6a6a"/><path d="M4.3 3v11.4M8 3v11.4M11.7 3v11.4M0.6 6.8h14.8M0.6 10.6h14.8" stroke="#9a9a9a" stroke-width="0.8"/><rect x="8.6" y="4.2" width="2.6" height="2.2" fill="#f08a3c"/></svg><span class="t" style="left:1111.00px;top:170px;font-size:12.5px;line-height:16px;color:#444;transform:scaleX(0.9444);">Synchronisation</span><svg style="left:1205px;top:171px;" width="16" height="14" viewBox="0 0 16 14"><rect x="0.5" y="0.5" width="15" height="13" fill="#fff" stroke="#4a78b8" stroke-width="1"/><rect x="1.6" y="1.6" width="12.8" height="5.4" fill="#8dbbe6"/><path d="M1.6 11.4V8.4L4.6 5.6L7 7.6L9.6 6L12 7.2L14.4 6.4V11.4Z" fill="#5a9a7c"/><rect x="1.6" y="11.4" width="12.8" height="1.1" fill="#e8eef6"/></svg><span class="t" style="left:1229.00px;top:170px;font-size:12.5px;line-height:16px;color:#444;transform:scaleX(0.9709);">Importer photos</span><svg style="left:1326px;top:180px;" width="8" height="8" viewBox="0 0 8 8"><rect x="1" y="0" width="6" height="1" fill="#222"/><path d="M1 3h6l-3 3.2z" fill="#222"/></svg><svg style="left:5px;top:192px;" width="4" height="19" viewBox="0 0 4 19"><rect x="0" y="0" width="1" height="1" fill="#9a9a9a"/><rect x="2" y="2" width="1" height="1" fill="#9a9a9a"/><rect x="0" y="4" width="1" height="1" fill="#9a9a9a"/><rect x="2" y="6" width="1" height="1" fill="#9a9a9a"/><rect x="0" y="8" width="1" height="1" fill="#9a9a9a"/><rect x="2" y="10" width="1" height="1" fill="#9a9a9a"/><rect x="0" y="12" width="1" height="1" fill="#9a9a9a"/><rect x="2" y="14" width="1" height="1" fill="#9a9a9a"/><rect x="0" y="16" width="1" height="1" fill="#9a9a9a"/><rect x="2" y="18" width="1" height="1" fill="#9a9a9a"/></svg><svg style="left:17px;top:194px;" width="13" height="15" viewBox="0 0 13 15"><rect x="1" y="1.5" width="11" height="13" fill="#fff" stroke="#5aa088" stroke-width="1"/><rect x="3.2" y="3.3" width="5.8" height="3.5" fill="#5aa088"/><g fill="#fff" stroke="#bdbdbd" stroke-width="0.6"><circle cx="0.3" cy="3.6" r="0.7"/><circle cx="1.9" cy="3.6" r="0.7"/><circle cx="0.3" cy="6.6" r="0.7"/><circle cx="1.9" cy="6.6" r="0.7"/><circle cx="0.3" cy="9.6" r="0.7"/><circle cx="1.9" cy="9.6" r="0.7"/><circle cx="0.3" cy="12.6" r="0.7"/><circle cx="1.9" cy="12.6" r="0.7"/></g></svg><span class="t" style="left:39.00px;top:194px;font-size:12.5px;line-height:16px;color:#444;transform:scaleX(0.9705);">Mode Edition d'horaire</span><svg style="left:172px;top:204px;" width="8" height="8" viewBox="0 0 8 8"><rect x="1" y="0" width="6" height="1" fill="#222"/><path d="M1 3h6l-3 3.2z" fill="#222"/></svg><div style="left:0px;top:214px;width:1920px;height:808px;background:#f0f0f0;"></div><div style="left:0px;top:239px;width:142px;height:745px;background:#fff;"></div><div style="left:0px;top:214px;width:142px;height:25px;background:#f3f3f3;"></div><span class="t" style="left:6.00px;top:215px;font-size:15.5px;line-height:19px;color:#15428b;font-weight:bold;transform:scaleX(1.0825);">Calendrier</span><svg style="left:127px;top:222px;" width="9" height="9" viewBox="0 0 9 9"><path d="M4 0.6L0.8 4.4L4 8.2M8 0.6L4.8 4.4L8 8.2" fill="none" stroke="#555" stroke-width="1.1"/></svg><div style="left:0px;top:239px;width:142px;height:72px;background:#f0f0f0;"></div><div style="left:5px;top:244px;width:13px;height:13px;background:#fff;border:1px solid #555;box-sizing:border-box;"></div><svg style="left:6px;top:245px;" width="11" height="11" viewBox="0 0 11 11"><path d="M2 5.4L4.4 8.2L9 2.4" fill="none" stroke="#000" stroke-width="1.7"/></svg><span class="t" style="left:22.00px;top:242px;font-size:11.5px;line-height:14px;color:#222;transform:scaleX(1.0160);">Edgar urologie</span><div style="left:5px;top:268px;width:13px;height:13px;background:#fff;border:1px solid #555;box-sizing:border-box;"></div><svg style="left:6px;top:269px;" width="11" height="11" viewBox="0 0 11 11"><path d="M2 5.4L4.4 8.2L9 2.4" fill="none" stroke="#000" stroke-width="1.7"/></svg><span class="t" style="left:22.00px;top:266px;font-size:11.5px;line-height:14px;color:#222;transform:scaleX(0.9619);">Laurent m. générale</span><div style="left:0px;top:311px;width:142px;height:19px;background:#dde1e7;"></div><span class="t" style="left:32.25px;top:313px;font-size:11px;line-height:14px;color:#222;transform:scaleX(1.0137);">novembre 2015</span><svg style="left:7px;top:316px;" width="5" height="9" viewBox="0 0 5 9"><path d="M4.6 0.4L0.6 4.5L4.6 8.6Z" fill="#9a9a9a"/></svg><svg style="left:131px;top:316px;" width="5" height="9" viewBox="0 0 5 9"><path d="M0.4 0.4L4.4 4.5L0.4 8.6Z" fill="#9a9a9a"/></svg><span class="t" style="left:21.33px;top:331px;font-size:11.5px;line-height:14px;color:#222;transform:scaleX(0.9200);">l</span><span class="t" style="left:35.05px;top:331px;font-size:11.5px;line-height:14px;color:#222;transform:scaleX(0.9200);">m</span><span class="t" style="left:52.00px;top:331px;font-size:11.5px;line-height:14px;color:#222;transform:scaleX(0.9200);">m</span><span class="t" style="left:72.31px;top:331px;font-size:11.5px;line-height:14px;color:#222;transform:scaleX(0.9200);">j</span><span class="t" style="left:87.66px;top:331px;font-size:11.5px;line-height:14px;color:#222;transform:scaleX(0.9200);">v</span><span class="t" style="left:104.61px;top:331px;font-size:11.5px;line-height:14px;color:#222;transform:scaleX(0.9200);">s</span><span class="t" style="left:121.26px;top:331px;font-size:11.5px;line-height:14px;color:#222;transform:scaleX(0.9200);">d</span><div style="left:15px;top:347px;width:119px;height:1px;background:#c4cad6;"></div><span class="t" style="left:18.26px;top:350px;font-size:11px;line-height:14px;color:#8a8a8a;transform:scaleX(0.9600);">26</span><span class="t" style="left:35.21px;top:350px;font-size:11px;line-height:14px;color:#8a8a8a;transform:scaleX(0.9600);">27</span><span class="t" style="left:52.16px;top:350px;font-size:11px;line-height:14px;color:#8a8a8a;transform:scaleX(0.9600);">28</span><span class="t" style="left:69.11px;top:350px;font-size:11px;line-height:14px;color:#8a8a8a;transform:scaleX(0.9600);">29</span><span class="t" style="left:86.06px;top:350px;font-size:11px;line-height:14px;color:#8a8a8a;transform:scaleX(0.9600);">30</span><span class="t" style="left:103.01px;top:350px;font-size:11px;line-height:14px;color:#8a8a8a;transform:scaleX(0.9600);">31</span><span class="t" style="left:125.82px;top:350px;font-size:11px;line-height:14px;color:#111;transform:scaleX(0.9600);">1</span><span class="t" style="left:24.12px;top:368px;font-size:11px;line-height:14px;color:#111;transform:scaleX(0.9600);">2</span><span class="t" style="left:41.07px;top:368px;font-size:11px;line-height:14px;color:#111;transform:scaleX(0.9600);">3</span><div style="left:49px;top:365.5px;width:17px;height:18px;background:#fbc55b;border:1px solid #d48a20;box-sizing:border-box;"></div><span class="t" style="left:57.96px;top:368px;font-size:11px;line-height:14px;color:#000;font-weight:bold;transform:scaleX(0.9700);">4</span><span class="t" style="left:74.97px;top:368px;font-size:11px;line-height:14px;color:#111;transform:scaleX(0.9600);">5</span><span class="t" style="left:91.92px;top:368px;font-size:11px;line-height:14px;color:#111;transform:scaleX(0.9600);">6</span><span class="t" style="left:108.87px;top:368px;font-size:11px;line-height:14px;color:#111;transform:scaleX(0.9600);">7</span><span class="t" style="left:125.82px;top:368px;font-size:11px;line-height:14px;color:#111;transform:scaleX(0.9600);">8</span><span class="t" style="left:24.12px;top:386px;font-size:11px;line-height:14px;color:#111;transform:scaleX(0.9600);">9</span><span class="t" style="left:35.21px;top:386px;font-size:11px;line-height:14px;color:#111;transform:scaleX(0.9600);">10</span><span class="t" style="left:52.93px;top:386px;font-size:11px;line-height:14px;color:#111;transform:scaleX(0.9600);">11</span><span class="t" style="left:69.11px;top:386px;font-size:11px;line-height:14px;color:#111;transform:scaleX(0.9600);">12</span><span class="t" style="left:86.06px;top:386px;font-size:11px;line-height:14px;color:#111;transform:scaleX(0.9600);">13</span><span class="t" style="left:103.01px;top:386px;font-size:11px;line-height:14px;color:#111;transform:scaleX(0.9600);">14</span><span class="t" style="left:119.96px;top:386px;font-size:11px;line-height:14px;color:#111;transform:scaleX(0.9600);">15</span><span class="t" style="left:18.26px;top:404px;font-size:11px;line-height:14px;color:#111;transform:scaleX(0.9600);">16</span><span class="t" style="left:35.21px;top:404px;font-size:11px;line-height:14px;color:#111;transform:scaleX(0.9600);">17</span><span class="t" style="left:52.16px;top:404px;font-size:11px;line-height:14px;color:#111;transform:scaleX(0.9600);">18</span><span class="t" style="left:69.11px;top:404px;font-size:11px;line-height:14px;color:#111;transform:scaleX(0.9600);">19</span><span class="t" style="left:86.06px;top:404px;font-size:11px;line-height:14px;color:#111;transform:scaleX(0.9600);">20</span><span class="t" style="left:103.01px;top:404px;font-size:11px;line-height:14px;color:#111;transform:scaleX(0.9600);">21</span><span class="t" style="left:119.96px;top:404px;font-size:11px;line-height:14px;color:#111;transform:scaleX(0.9600);">22</span><span class="t" style="left:18.26px;top:422px;font-size:11px;line-height:14px;color:#111;transform:scaleX(0.9600);">23</span><span class="t" style="left:35.21px;top:422px;font-size:11px;line-height:14px;color:#111;transform:scaleX(0.9600);">24</span><span class="t" style="left:52.16px;top:422px;font-size:11px;line-height:14px;color:#111;transform:scaleX(0.9600);">25</span><span class="t" style="left:69.11px;top:422px;font-size:11px;line-height:14px;color:#111;transform:scaleX(0.9600);">26</span><span class="t" style="left:86.06px;top:422px;font-size:11px;line-height:14px;color:#111;transform:scaleX(0.9600);">27</span><span class="t" style="left:103.01px;top:422px;font-size:11px;line-height:14px;color:#111;transform:scaleX(0.9600);">28</span><span class="t" style="left:119.96px;top:422px;font-size:11px;line-height:14px;color:#111;transform:scaleX(0.9600);">29</span><span class="t" style="left:18.26px;top:440px;font-size:11px;line-height:14px;color:#111;transform:scaleX(0.9600);">30</span><div style="left:0px;top:459px;width:142px;height:19px;background:#dde1e7;"></div><span class="t" style="left:32.25px;top:461px;font-size:11px;line-height:14px;color:#222;transform:scaleX(1.0137);">décembre 2015</span><span class="t" style="left:21.33px;top:479px;font-size:11.5px;line-height:14px;color:#222;transform:scaleX(0.9200);">l</span><span class="t" style="left:35.05px;top:479px;font-size:11.5px;line-height:14px;color:#222;transform:scaleX(0.9200);">m</span><span class="t" style="left:52.00px;top:479px;font-size:11.5px;line-height:14px;color:#222;transform:scaleX(0.9200);">m</span><span class="t" style="left:72.31px;top:479px;font-size:11.5px;line-height:14px;color:#222;transform:scaleX(0.9200);">j</span><span class="t" style="left:87.66px;top:479px;font-size:11.5px;line-height:14px;color:#222;transform:scaleX(0.9200);">v</span><span class="t" style="left:104.61px;top:479px;font-size:11.5px;line-height:14px;color:#222;transform:scaleX(0.9200);">s</span><span class="t" style="left:121.26px;top:479px;font-size:11.5px;line-height:14px;color:#222;transform:scaleX(0.9200);">d</span><div style="left:15px;top:495px;width:119px;height:1px;background:#c4cad6;"></div><span class="t" style="left:41.07px;top:498px;font-size:11px;line-height:14px;color:#111;transform:scaleX(0.9600);">1</span><span class="t" style="left:58.02px;top:498px;font-size:11px;line-height:14px;color:#111;transform:scaleX(0.9600);">2</span><span class="t" style="left:74.97px;top:498px;font-size:11px;line-height:14px;color:#111;transform:scaleX(0.9600);">3</span><span class="t" style="left:91.92px;top:498px;font-size:11px;line-height:14px;color:#111;transform:scaleX(0.9600);">4</span><span class="t" style="left:108.87px;top:498px;font-size:11px;line-height:14px;color:#111;transform:scaleX(0.9600);">5</span><span class="t" style="left:125.82px;top:498px;font-size:11px;line-height:14px;color:#111;transform:scaleX(0.9600);">6</span><span class="t" style="left:24.12px;top:516px;font-size:11px;line-height:14px;color:#111;transform:scaleX(0.9600);">7</span><span class="t" style="left:41.07px;top:516px;font-size:11px;line-height:14px;color:#111;transform:scaleX(0.9600);">8</span><span class="t" style="left:58.02px;top:516px;font-size:11px;line-height:14px;color:#111;transform:scaleX(0.9600);">9</span><span class="t" style="left:69.11px;top:516px;font-size:11px;line-height:14px;color:#111;transform:scaleX(0.9600);">10</span><span class="t" style="left:86.83px;top:516px;font-size:11px;line-height:14px;color:#111;transform:scaleX(0.9600);">11</span><span class="t" style="left:103.01px;top:516px;font-size:11px;line-height:14px;color:#111;transform:scaleX(0.9600);">12</span><span class="t" style="left:119.96px;top:516px;font-size:11px;line-height:14px;color:#111;transform:scaleX(0.9600);">13</span><span class="t" style="left:18.26px;top:534px;font-size:11px;line-height:14px;color:#111;transform:scaleX(0.9600);">14</span><span class="t" style="left:35.21px;top:534px;font-size:11px;line-height:14px;color:#111;transform:scaleX(0.9600);">15</span><span class="t" style="left:52.16px;top:534px;font-size:11px;line-height:14px;color:#111;transform:scaleX(0.9600);">16</span><span class="t" style="left:69.11px;top:534px;font-size:11px;line-height:14px;color:#111;transform:scaleX(0.9600);">17</span><span class="t" style="left:86.06px;top:534px;font-size:11px;line-height:14px;color:#111;transform:scaleX(0.9600);">18</span><span class="t" style="left:103.01px;top:534px;font-size:11px;line-height:14px;color:#111;transform:scaleX(0.9600);">19</span><span class="t" style="left:119.96px;top:534px;font-size:11px;line-height:14px;color:#111;transform:scaleX(0.9600);">20</span><span class="t" style="left:18.26px;top:552px;font-size:11px;line-height:14px;color:#111;transform:scaleX(0.9600);">21</span><span class="t" style="left:35.21px;top:552px;font-size:11px;line-height:14px;color:#111;transform:scaleX(0.9600);">22</span><span class="t" style="left:52.16px;top:552px;font-size:11px;line-height:14px;color:#111;transform:scaleX(0.9600);">23</span><span class="t" style="left:69.11px;top:552px;font-size:11px;line-height:14px;color:#111;transform:scaleX(0.9600);">24</span><span class="t" style="left:86.06px;top:552px;font-size:11px;line-height:14px;color:#111;transform:scaleX(0.9600);">25</span><span class="t" style="left:103.01px;top:552px;font-size:11px;line-height:14px;color:#111;transform:scaleX(0.9600);">26</span><span class="t" style="left:119.96px;top:552px;font-size:11px;line-height:14px;color:#111;transform:scaleX(0.9600);">27</span><span class="t" style="left:18.26px;top:570px;font-size:11px;line-height:14px;color:#111;transform:scaleX(0.9600);">28</span><span class="t" style="left:35.21px;top:570px;font-size:11px;line-height:14px;color:#111;transform:scaleX(0.9600);">29</span><span class="t" style="left:52.16px;top:570px;font-size:11px;line-height:14px;color:#111;transform:scaleX(0.9600);">30</span><span class="t" style="left:69.11px;top:570px;font-size:11px;line-height:14px;color:#111;transform:scaleX(0.9600);">31</span><div style="left:0px;top:607px;width:142px;height:19px;background:#dde1e7;"></div><span class="t" style="left:41.27px;top:609px;font-size:11px;line-height:14px;color:#222;">janvier 2016</span><span class="t" style="left:21.33px;top:627px;font-size:11.5px;line-height:14px;color:#222;transform:scaleX(0.9200);">l</span><span class="t" style="left:35.05px;top:627px;font-size:11.5px;line-height:14px;color:#222;transform:scaleX(0.9200);">m</span><span class="t" style="left:52.00px;top:627px;font-size:11.5px;line-height:14px;color:#222;transform:scaleX(0.9200);">m</span><span class="t" style="left:72.31px;top:627px;font-size:11.5px;line-height:14px;color:#222;transform:scaleX(0.9200);">j</span><span class="t" style="left:87.66px;top:627px;font-size:11.5px;line-height:14px;color:#222;transform:scaleX(0.9200);">v</span><span class="t" style="left:104.61px;top:627px;font-size:11.5px;line-height:14px;color:#222;transform:scaleX(0.9200);">s</span><span class="t" style="left:121.26px;top:627px;font-size:11.5px;line-height:14px;color:#222;transform:scaleX(0.9200);">d</span><div style="left:15px;top:643px;width:119px;height:1px;background:#c4cad6;"></div><span class="t" style="left:91.92px;top:646px;font-size:11px;line-height:14px;color:#111;transform:scaleX(0.9600);">1</span><span class="t" style="left:108.87px;top:646px;font-size:11px;line-height:14px;color:#111;transform:scaleX(0.9600);">2</span><span class="t" style="left:125.82px;top:646px;font-size:11px;line-height:14px;color:#111;transform:scaleX(0.9600);">3</span><span class="t" style="left:24.12px;top:664px;font-size:11px;line-height:14px;color:#111;transform:scaleX(0.9600);">4</span><span class="t" style="left:41.07px;top:664px;font-size:11px;line-height:14px;color:#111;transform:scaleX(0.9600);">5</span><span class="t" style="left:58.02px;top:664px;font-size:11px;line-height:14px;color:#111;transform:scaleX(0.9600);">6</span><span class="t" style="left:74.97px;top:664px;font-size:11px;line-height:14px;color:#111;transform:scaleX(0.9600);">7</span><span class="t" style="left:91.92px;top:664px;font-size:11px;line-height:14px;color:#111;transform:scaleX(0.9600);">8</span><span class="t" style="left:108.87px;top:664px;font-size:11px;line-height:14px;color:#111;transform:scaleX(0.9600);">9</span><span class="t" style="left:119.96px;top:664px;font-size:11px;line-height:14px;color:#111;transform:scaleX(0.9600);">10</span><span class="t" style="left:19.03px;top:682px;font-size:11px;line-height:14px;color:#111;transform:scaleX(0.9600);">11</span><span class="t" style="left:35.21px;top:682px;font-size:11px;line-height:14px;color:#111;transform:scaleX(0.9600);">12</span><span class="t" style="left:52.16px;top:682px;font-size:11px;line-height:14px;color:#111;transform:scaleX(0.9600);">13</span><span class="t" style="left:69.11px;top:682px;font-size:11px;line-height:14px;color:#111;transform:scaleX(0.9600);">14</span><span class="t" style="left:86.06px;top:682px;font-size:11px;line-height:14px;color:#111;transform:scaleX(0.9600);">15</span><span class="t" style="left:103.01px;top:682px;font-size:11px;line-height:14px;color:#111;transform:scaleX(0.9600);">16</span><span class="t" style="left:119.96px;top:682px;font-size:11px;line-height:14px;color:#111;transform:scaleX(0.9600);">17</span><span class="t" style="left:18.26px;top:700px;font-size:11px;line-height:14px;color:#111;transform:scaleX(0.9600);">18</span><span class="t" style="left:35.21px;top:700px;font-size:11px;line-height:14px;color:#111;transform:scaleX(0.9600);">19</span><span class="t" style="left:52.16px;top:700px;font-size:11px;line-height:14px;color:#111;transform:scaleX(0.9600);">20</span><span class="t" style="left:69.11px;top:700px;font-size:11px;line-height:14px;color:#111;transform:scaleX(0.9600);">21</span><span class="t" style="left:86.06px;top:700px;font-size:11px;line-height:14px;color:#111;transform:scaleX(0.9600);">22</span><span class="t" style="left:103.01px;top:700px;font-size:11px;line-height:14px;color:#111;transform:scaleX(0.9600);">23</span><span class="t" style="left:119.96px;top:700px;font-size:11px;line-height:14px;color:#111;transform:scaleX(0.9600);">24</span><span class="t" style="left:18.26px;top:718px;font-size:11px;line-height:14px;color:#111;transform:scaleX(0.9600);">25</span><span class="t" style="left:35.21px;top:718px;font-size:11px;line-height:14px;color:#111;transform:scaleX(0.9600);">26</span><span class="t" style="left:52.16px;top:718px;font-size:11px;line-height:14px;color:#111;transform:scaleX(0.9600);">27</span><span class="t" style="left:69.11px;top:718px;font-size:11px;line-height:14px;color:#111;transform:scaleX(0.9600);">28</span><span class="t" style="left:86.06px;top:718px;font-size:11px;line-height:14px;color:#111;transform:scaleX(0.9600);">29</span><span class="t" style="left:103.01px;top:718px;font-size:11px;line-height:14px;color:#111;transform:scaleX(0.9600);">30</span><span class="t" style="left:119.96px;top:718px;font-size:11px;line-height:14px;color:#111;transform:scaleX(0.9600);">31</span><div style="left:0px;top:755px;width:142px;height:19px;background:#dde1e7;"></div><span class="t" style="left:42.00px;top:757px;font-size:11px;line-height:14px;color:#222;">février 2016</span><span class="t" style="left:21.33px;top:775px;font-size:11.5px;line-height:14px;color:#222;transform:scaleX(0.9200);">l</span><span class="t" style="left:35.05px;top:775px;font-size:11.5px;line-height:14px;color:#222;transform:scaleX(0.9200);">m</span><span class="t" style="left:52.00px;top:775px;font-size:11.5px;line-height:14px;color:#222;transform:scaleX(0.9200);">m</span><span class="t" style="left:72.31px;top:775px;font-size:11.5px;line-height:14px;color:#222;transform:scaleX(0.9200);">j</span><span class="t" style="left:87.66px;top:775px;font-size:11.5px;line-height:14px;color:#222;transform:scaleX(0.9200);">v</span><span class="t" style="left:104.61px;top:775px;font-size:11.5px;line-height:14px;color:#222;transform:scaleX(0.9200);">s</span><span class="t" style="left:121.26px;top:775px;font-size:11.5px;line-height:14px;color:#222;transform:scaleX(0.9200);">d</span><div style="left:15px;top:791px;width:119px;height:1px;background:#c4cad6;"></div><span class="t" style="left:24.12px;top:794px;font-size:11px;line-height:14px;color:#111;transform:scaleX(0.9600);">1</span><span class="t" style="left:41.07px;top:794px;font-size:11px;line-height:14px;color:#111;transform:scaleX(0.9600);">2</span><span class="t" style="left:58.02px;top:794px;font-size:11px;line-height:14px;color:#111;transform:scaleX(0.9600);">3</span><span class="t" style="left:74.97px;top:794px;font-size:11px;line-height:14px;color:#111;transform:scaleX(0.9600);">4</span><span class="t" style="left:91.92px;top:794px;font-size:11px;line-height:14px;color:#111;transform:scaleX(0.9600);">5</span><span class="t" style="left:108.87px;top:794px;font-size:11px;line-height:14px;color:#111;transform:scaleX(0.9600);">6</span><span class="t" style="left:125.82px;top:794px;font-size:11px;line-height:14px;color:#111;transform:scaleX(0.9600);">7</span><span class="t" style="left:24.12px;top:812px;font-size:11px;line-height:14px;color:#111;transform:scaleX(0.9600);">8</span><span class="t" style="left:41.07px;top:812px;font-size:11px;line-height:14px;color:#111;transform:scaleX(0.9600);">9</span><span class="t" style="left:52.16px;top:812px;font-size:11px;line-height:14px;color:#111;transform:scaleX(0.9600);">10</span><span class="t" style="left:69.88px;top:812px;font-size:11px;line-height:14px;color:#111;transform:scaleX(0.9600);">11</span><span class="t" style="left:86.06px;top:812px;font-size:11px;line-height:14px;color:#111;transform:scaleX(0.9600);">12</span><span class="t" style="left:103.01px;top:812px;font-size:11px;line-height:14px;color:#111;transform:scaleX(0.9600);">13</span><span class="t" style="left:119.96px;top:812px;font-size:11px;line-height:14px;color:#111;transform:scaleX(0.9600);">14</span><span class="t" style="left:18.26px;top:830px;font-size:11px;line-height:14px;color:#111;transform:scaleX(0.9600);">15</span><span class="t" style="left:35.21px;top:830px;font-size:11px;line-height:14px;color:#111;transform:scaleX(0.9600);">16</span><span class="t" style="left:52.16px;top:830px;font-size:11px;line-height:14px;color:#111;transform:scaleX(0.9600);">17</span><span class="t" style="left:69.11px;top:830px;font-size:11px;line-height:14px;color:#111;transform:scaleX(0.9600);">18</span><span class="t" style="left:86.06px;top:830px;font-size:11px;line-height:14px;color:#111;transform:scaleX(0.9600);">19</span><span class="t" style="left:103.01px;top:830px;font-size:11px;line-height:14px;color:#111;transform:scaleX(0.9600);">20</span><span class="t" style="left:119.96px;top:830px;font-size:11px;line-height:14px;color:#111;transform:scaleX(0.9600);">21</span><span class="t" style="left:18.26px;top:848px;font-size:11px;line-height:14px;color:#111;transform:scaleX(0.9600);">22</span><span class="t" style="left:35.21px;top:848px;font-size:11px;line-height:14px;color:#111;transform:scaleX(0.9600);">23</span><span class="t" style="left:52.16px;top:848px;font-size:11px;line-height:14px;color:#111;transform:scaleX(0.9600);">24</span><span class="t" style="left:69.11px;top:848px;font-size:11px;line-height:14px;color:#111;transform:scaleX(0.9600);">25</span><span class="t" style="left:86.06px;top:848px;font-size:11px;line-height:14px;color:#111;transform:scaleX(0.9600);">26</span><span class="t" style="left:103.01px;top:848px;font-size:11px;line-height:14px;color:#111;transform:scaleX(0.9600);">27</span><span class="t" style="left:119.96px;top:848px;font-size:11px;line-height:14px;color:#111;transform:scaleX(0.9600);">28</span><span class="t" style="left:18.26px;top:866px;font-size:11px;line-height:14px;color:#111;transform:scaleX(0.9600);">29</span><span class="t" style="left:41.07px;top:866px;font-size:11px;line-height:14px;color:#8a8a8a;transform:scaleX(0.9600);">1</span><span class="t" style="left:58.02px;top:866px;font-size:11px;line-height:14px;color:#8a8a8a;transform:scaleX(0.9600);">2</span><span class="t" style="left:74.97px;top:866px;font-size:11px;line-height:14px;color:#8a8a8a;transform:scaleX(0.9600);">3</span><span class="t" style="left:91.92px;top:866px;font-size:11px;line-height:14px;color:#8a8a8a;transform:scaleX(0.9600);">4</span><span class="t" style="left:108.87px;top:866px;font-size:11px;line-height:14px;color:#8a8a8a;transform:scaleX(0.9600);">5</span><span class="t" style="left:125.82px;top:866px;font-size:11px;line-height:14px;color:#8a8a8a;transform:scaleX(0.9600);">6</span><span class="t" style="left:24.12px;top:884px;font-size:11px;line-height:14px;color:#8a8a8a;transform:scaleX(0.9600);">7</span><span class="t" style="left:41.07px;top:884px;font-size:11px;line-height:14px;color:#8a8a8a;transform:scaleX(0.9600);">8</span><span class="t" style="left:58.02px;top:884px;font-size:11px;line-height:14px;color:#8a8a8a;transform:scaleX(0.9600);">9</span><span class="t" style="left:69.11px;top:884px;font-size:11px;line-height:14px;color:#8a8a8a;transform:scaleX(0.9600);">10</span><span class="t" style="left:86.83px;top:884px;font-size:11px;line-height:14px;color:#8a8a8a;transform:scaleX(0.9600);">11</span><span class="t" style="left:103.01px;top:884px;font-size:11px;line-height:14px;color:#8a8a8a;transform:scaleX(0.9600);">12</span><span class="t" style="left:119.96px;top:884px;font-size:11px;line-height:14px;color:#8a8a8a;transform:scaleX(0.9600);">13</span><div style="left:0px;top:984px;width:142px;height:7px;background:linear-gradient(#7d7d7d 0,#7d7d7d 14%,#a9a9a9 15%,#c6c6c6 84%,#777 85%);"></div><svg style="left:55px;top:986px;" width="36" height="3" viewBox="0 0 36 3"><rect x="0.0" y="0" width="1.9" height="2.2" fill="#fff"/><rect x="3.1" y="0" width="1.9" height="2.2" fill="#fff"/><rect x="6.2" y="0" width="1.9" height="2.2" fill="#fff"/><rect x="9.3" y="0" width="1.9" height="2.2" fill="#fff"/><rect x="12.4" y="0" width="1.9" height="2.2" fill="#fff"/><rect x="15.5" y="0" width="1.9" height="2.2" fill="#fff"/><rect x="18.6" y="0" width="1.9" height="2.2" fill="#fff"/><rect x="21.7" y="0" width="1.9" height="2.2" fill="#fff"/><rect x="24.8" y="0" width="1.9" height="2.2" fill="#fff"/><rect x="27.9" y="0" width="1.9" height="2.2" fill="#fff"/><rect x="31.0" y="0" width="1.9" height="2.2" fill="#fff"/></svg><div style="left:0px;top:991px;width:142px;height:31px;background:#f0f0f0;"></div><div style="left:44px;top:991px;width:20px;height:30px;background:#fbab3e;"></div><svg style="left:46px;top:998px;" width="16" height="15" viewBox="0 0 16 15"><rect x="0" y="0" width="16" height="15" fill="#8d9097"/><rect x="0" y="0" width="16" height="2.6" fill="#5d636e"/><path d="M0.5 0V14.5H15.5V0" fill="none" stroke="#5d636e" stroke-width="1"/><rect x="1.3" y="3.4" width="1.9" height="1.9" fill="#fff"/><rect x="1.3" y="6.3" width="1.9" height="1.9" fill="#fff"/><rect x="1.3" y="9.2" width="1.9" height="1.9" fill="#fff"/><rect x="1.3" y="12.1" width="1.9" height="1.9" fill="#fff"/><rect x="4.2" y="3.4" width="1.9" height="1.9" fill="#fff"/><rect x="4.2" y="6.3" width="1.9" height="1.9" fill="#fff"/><rect x="4.2" y="9.2" width="1.9" height="1.9" fill="#fff"/><rect x="4.2" y="12.1" width="1.9" height="1.9" fill="#fff"/><rect x="7.1" y="3.4" width="1.9" height="1.9" fill="#fff"/><rect x="7.1" y="6.3" width="1.9" height="1.9" fill="#fff"/><rect x="7.1" y="9.2" width="1.9" height="1.9" fill="#fff"/><rect x="7.1" y="12.1" width="1.9" height="1.9" fill="#fff"/><rect x="10.0" y="3.4" width="1.9" height="1.9" fill="#fff"/><rect x="10.0" y="6.3" width="1.9" height="1.9" fill="#fff"/><rect x="10.0" y="9.2" width="1.9" height="1.9" fill="#fff"/><rect x="10.0" y="12.1" width="1.9" height="1.9" fill="#fff"/><rect x="12.9" y="3.4" width="1.9" height="1.9" fill="#fff"/><rect x="12.9" y="6.3" width="1.9" height="1.9" fill="#fff"/><rect x="12.9" y="9.2" width="1.9" height="1.9" fill="#fff"/><rect x="12.9" y="12.1" width="1.9" height="1.9" fill="#fff"/><rect x="9.2" y="5.2" width="3.8" height="3.8" fill="#fff" stroke="#f08a2c" stroke-width="1.3"/></svg><svg style="left:66px;top:997px;" width="16" height="17" viewBox="0 0 16 17"><defs><linearGradient id="scr" x1="0" y1="0" x2="1" y2="1"><stop offset="0" stop-color="#1f8fd8"/><stop offset="0.5" stop-color="#1565c0"/><stop offset="1" stop-color="#5ab0ea"/></linearGradient></defs><path d="M1 1.4L14.6 0.6L13.6 11.6L1.6 10.8Z" fill="#e8eef4" stroke="#9fb2c8" stroke-width="0.6"/><path d="M1.8 2.2L12.6 1.6L12 10.4L2.2 9.8Z" fill="url(#scr)"/><circle cx="4.8" cy="5.6" r="1.5" fill="none" stroke="#e6f2fb" stroke-width="1"/><circle cx="8.8" cy="4.6" r="1.3" fill="none" stroke="#e6f2fb" stroke-width="0.9"/><path d="M5.4 11.4L10.6 11.6L11.4 14.2C9 16.4 5.2 16 3.8 14.4Z" fill="#dfe6ec" stroke="#aebccc" stroke-width="0.5"/></svg><svg style="left:86px;top:997px;" width="15" height="17" viewBox="0 0 15 17"><defs><linearGradient id="flk" x1="0" y1="0" x2="1" y2="0"><stop offset="0" stop-color="#d8281a"/><stop offset="0.45" stop-color="#f7a27c"/><stop offset="1" stop-color="#c9301c"/></linearGradient></defs><path d="M5.2 1h4.6v1.4h-0.7v3.4L13.6 13.6c0.7 1.4 0 2.4-1.4 2.4H2.8c-1.4 0-2.1-1-1.4-2.4L5.9 5.8V2.4h-0.7z" fill="url(#flk)" stroke="#8e2a3a" stroke-width="0.8"/><path d="M6.4 2.2h2.2v3.8l-1.1 1.6l-1.1-1.6z" fill="#fff" opacity=".55"/><path d="M5.6 9.4h3.8" stroke="#fff" stroke-width="0.8" opacity=".8"/></svg><svg style="left:106px;top:998px;" width="17" height="16" viewBox="0 0 17 16"><path d="M0.8 4.6L10.6 1.2L15 11.4L5.4 14.8Z" fill="#ececec" stroke="#9a9a9a" stroke-width="0.7"/><path d="M0.8 4.6L10.6 1.2L11.6 3.6L1.8 7Z" fill="#f7cf2e"/><path d="M3.2 8.6l7-2.4M4.2 10.8l7-2.4" stroke="#7d7d7d" stroke-width="1.5"/><path d="M6.6 12.4L14.6 5L16.2 6.6L8 13.8L5.8 14.4Z" fill="#aeb6c2" stroke="#5a626e" stroke-width="0.6"/></svg><svg style="left:130px;top:1000px;" width="8" height="13" viewBox="0 0 8 13"><path d="M0.8 0.6L3.2 2.6L0.8 4.6M4.2 0.6L6.6 2.6L4.2 4.6" fill="none" stroke="#000" stroke-width="1.3"/><path d="M0.8 9h6.4l-3.2 3z" fill="#000"/></svg><div style="left:143px;top:215px;width:73px;height:26px;border:1px solid #acacac;box-sizing:border-box;background:linear-gradient(#f0f0f0,#ebebeb 45%,#e3e3e3);"></div><span class="t" style="left:169.50px;top:220px;font-size:12px;line-height:16px;color:#000;transform:scaleX(0.9368);">Day</span><div style="left:217px;top:215px;width:73px;height:26px;border:1px solid #acacac;box-sizing:border-box;background:linear-gradient(#f0f0f0,#ebebeb 45%,#e3e3e3);"></div><span class="t" style="left:239.50px;top:220px;font-size:12px;line-height:16px;color:#000;transform:scaleX(0.9188);">Week</span><div style="left:291px;top:215px;width:73px;height:26px;border:1px solid #acacac;box-sizing:border-box;background:linear-gradient(#f0f0f0,#ebebeb 45%,#e3e3e3);"></div><span class="t" style="left:312.00px;top:220px;font-size:12px;line-height:16px;color:#000;transform:scaleX(0.9295);">Month</span><div style="left:379px;top:221px;width:13px;height:13px;background:#fff;border:1px solid #555;border-radius:7px;box-sizing:border-box;"></div><span class="t" style="left:394.00px;top:220px;font-size:12px;line-height:16px;color:#000;transform:scaleX(0.9217);">Show work week</span><div style="left:500px;top:221px;width:13px;height:13px;background:#fff;border:1px solid #555;border-radius:7px;box-sizing:border-box;"></div><span class="t" style="left:515.00px;top:220px;font-size:12px;line-height:16px;color:#000;transform:scaleX(0.9241);">Show full week</span><svg style="left:160px;top:259px;" width="10" height="10" viewBox="0 0 10 10"><path d="M0.2 5L5.2 0.4V3H9.6V7H5.2V9.6Z" fill="#4e4e4e"/></svg><svg style="left:187px;top:259px;" width="10" height="10" viewBox="0 0 10 10"><path d="M9.8 5L4.8 0.4V3H0.4V7H4.8V9.6Z" fill="#4e4e4e"/></svg><span class="t" style="left:220.00px;top:245px;font-size:18.5px;line-height:23px;color:#000;transform:scaleX(1.0449);">mercredi 4 novembre 2015</span><div style="left:142px;top:287px;width:48px;height:734px;background:#f6f7f9;"></div><div style="left:190px;top:287px;width:393px;height:734px;background:#fff;"></div><div style="left:190px;top:287px;width:196px;height:18px;background:#c5d5ec;border:1px solid #8db2e3;box-sizing:border-box;"></div><span class="t" style="left:231.00px;top:289px;font-size:10.5px;line-height:14px;color:#000;font-weight:bold;transform:scaleX(1.1426);">Laurent m. générale</span><div style="left:386px;top:287px;width:197px;height:18px;background:#c4dabc;border:1px solid #a3c796;box-sizing:border-box;"></div><span class="t" style="left:448.00px;top:289px;font-size:11px;line-height:14px;color:#222;transform:scaleX(1.0203);">Edgar urologie</span><div style="left:190px;top:305px;width:393px;height:19px;background:#f0a028;"></div><span class="t" style="left:193.50px;top:307px;font-size:10.5px;line-height:14px;color:#000;font-weight:bold;transform:scaleX(1.1135);">04</span><span class="t" style="left:389.50px;top:307px;font-size:10.5px;line-height:14px;color:#000;font-weight:bold;transform:scaleX(1.1135);">04</span><span class="t" style="left:267.50px;top:306px;font-size:11px;line-height:14px;color:#222;transform:scaleX(1.0053);">mercredi</span><span class="t" style="left:463.50px;top:306px;font-size:11px;line-height:14px;color:#222;transform:scaleX(1.0053);">mercredi</span><div style="left:191px;top:324px;width:194px;height:28px;background:#a5bfe1;"></div><div style="left:387px;top:324px;width:195px;height:28px;background:#aecba2;"></div><div style="left:191px;top:376px;width:194px;height:1px;background:#dfe8f5;"></div><div style="left:387px;top:376px;width:195px;height:1px;background:#dfeadb;"></div><div style="left:191px;top:399px;width:194px;height:1px;background:#dfe8f5;"></div><div style="left:387px;top:399px;width:195px;height:1px;background:#dfeadb;"></div><div style="left:191px;top:422px;width:194px;height:1px;background:#dfe8f5;"></div><div style="left:387px;top:422px;width:195px;height:1px;background:#dfeadb;"></div><div style="left:191px;top:445px;width:194px;height:1px;background:#a8c0e4;"></div><div style="left:387px;top:445px;width:195px;height:1px;background:#b3d0a6;"></div><div style="left:191px;top:468px;width:194px;height:1px;background:#dfe8f5;"></div><div style="left:387px;top:468px;width:195px;height:1px;background:#dfeadb;"></div><div style="left:191px;top:491px;width:194px;height:1px;background:#dfe8f5;"></div><div style="left:387px;top:491px;width:195px;height:1px;background:#dfeadb;"></div><div style="left:191px;top:514px;width:194px;height:1px;background:#dfe8f5;"></div><div style="left:387px;top:514px;width:195px;height:1px;background:#dfeadb;"></div><div style="left:191px;top:537px;width:194px;height:1px;background:#a8c0e4;"></div><div style="left:387px;top:537px;width:195px;height:1px;background:#b3d0a6;"></div><div style="left:191px;top:560px;width:194px;height:1px;background:#dfe8f5;"></div><div style="left:387px;top:560px;width:195px;height:1px;background:#dfeadb;"></div><div style="left:191px;top:583px;width:194px;height:1px;background:#dfe8f5;"></div><div style="left:387px;top:583px;width:195px;height:1px;background:#dfeadb;"></div><div style="left:191px;top:606px;width:194px;height:1px;background:#dfe8f5;"></div><div style="left:387px;top:606px;width:195px;height:1px;background:#dfeadb;"></div><div style="left:191px;top:629px;width:194px;height:1px;background:#a8c0e4;"></div><div style="left:387px;top:629px;width:195px;height:1px;background:#b3d0a6;"></div><div style="left:191px;top:652px;width:194px;height:1px;background:#dfe8f5;"></div><div style="left:387px;top:652px;width:195px;height:1px;background:#dfeadb;"></div><div style="left:191px;top:675px;width:194px;height:1px;background:#dfe8f5;"></div><div style="left:387px;top:675px;width:195px;height:1px;background:#dfeadb;"></div><div style="left:191px;top:698px;width:194px;height:1px;background:#dfe8f5;"></div><div style="left:387px;top:698px;width:195px;height:1px;background:#dfeadb;"></div><div style="left:191px;top:721px;width:194px;height:1px;background:#a8c0e4;"></div><div style="left:387px;top:721px;width:195px;height:1px;background:#b3d0a6;"></div><div style="left:191px;top:744px;width:194px;height:1px;background:#dfe8f5;"></div><div style="left:387px;top:744px;width:195px;height:1px;background:#dfeadb;"></div><div style="left:191px;top:767px;width:194px;height:1px;background:#dfe8f5;"></div><div style="left:387px;top:767px;width:195px;height:1px;background:#dfeadb;"></div><div style="left:191px;top:790px;width:194px;height:1px;background:#dfe8f5;"></div><div style="left:387px;top:790px;width:195px;height:1px;background:#dfeadb;"></div><div style="left:191px;top:813px;width:194px;height:1px;background:#a8c0e4;"></div><div style="left:387px;top:813px;width:195px;height:1px;background:#b3d0a6;"></div><div style="left:191px;top:836px;width:194px;height:1px;background:#dfe8f5;"></div><div style="left:387px;top:836px;width:195px;height:1px;background:#dfeadb;"></div><div style="left:191px;top:859px;width:194px;height:1px;background:#dfe8f5;"></div><div style="left:387px;top:859px;width:195px;height:1px;background:#dfeadb;"></div><div style="left:191px;top:882px;width:194px;height:1px;background:#dfe8f5;"></div><div style="left:387px;top:882px;width:195px;height:1px;background:#dfeadb;"></div><div style="left:191px;top:905px;width:194px;height:1px;background:#a8c0e4;"></div><div style="left:387px;top:905px;width:195px;height:1px;background:#b3d0a6;"></div><div style="left:191px;top:928px;width:194px;height:1px;background:#dfe8f5;"></div><div style="left:387px;top:928px;width:195px;height:1px;background:#dfeadb;"></div><div style="left:191px;top:951px;width:194px;height:1px;background:#dfe8f5;"></div><div style="left:387px;top:951px;width:195px;height:1px;background:#dfeadb;"></div><div style="left:191px;top:974px;width:194px;height:1px;background:#dfe8f5;"></div><div style="left:387px;top:974px;width:195px;height:1px;background:#dfeadb;"></div><div style="left:191px;top:997px;width:194px;height:1px;background:#a8c0e4;"></div><div style="left:387px;top:997px;width:195px;height:1px;background:#b3d0a6;"></div><div style="left:190px;top:305px;width:1px;height:716px;background:#ee9a1e;"></div><div style="left:385px;top:305px;width:2px;height:716px;background:#ee9a1e;"></div><div style="left:582px;top:305px;width:1px;height:716px;background:#ee9a1e;"></div><div style="left:190px;top:351px;width:393px;height:2px;background:#ee9a1e;"></div><div style="left:190px;top:1020px;width:393px;height:1px;background:#ee9a1e;"></div><span class="t" style="left:155.00px;top:358px;font-size:11px;line-height:14px;color:#8a8a8a;">08:00</span><span class="t" style="left:155.00px;top:404px;font-size:11px;line-height:14px;color:#8a8a8a;">08:30</span><span class="t" style="left:155.00px;top:450px;font-size:11px;line-height:14px;color:#8a8a8a;">09:00</span><span class="t" style="left:155.00px;top:496px;font-size:11px;line-height:14px;color:#8a8a8a;">09:30</span><span class="t" style="left:155.00px;top:542px;font-size:11px;line-height:14px;color:#8a8a8a;">10:00</span><span class="t" style="left:155.00px;top:588px;font-size:11px;line-height:14px;color:#8a8a8a;">10:30</span><span class="t" style="left:155.00px;top:634px;font-size:11px;line-height:14px;color:#8a8a8a;transform:scaleX(1.0300);">11:00</span><span class="t" style="left:155.00px;top:680px;font-size:11px;line-height:14px;color:#8a8a8a;transform:scaleX(1.0300);">11:30</span><span class="t" style="left:155.00px;top:726px;font-size:11px;line-height:14px;color:#8a8a8a;">12:00</span><span class="t" style="left:155.00px;top:772px;font-size:11px;line-height:14px;color:#8a8a8a;">12:30</span><span class="t" style="left:155.00px;top:818px;font-size:11px;line-height:14px;color:#8a8a8a;">13:00</span><span class="t" style="left:155.00px;top:864px;font-size:11px;line-height:14px;color:#8a8a8a;">13:30</span><span class="t" style="left:155.00px;top:910px;font-size:11px;line-height:14px;color:#8a8a8a;">14:00</span><span class="t" style="left:155.00px;top:956px;font-size:11px;line-height:14px;color:#8a8a8a;">14:30</span><span class="t" style="left:155.00px;top:1002px;font-size:11px;line-height:14px;color:#8a8a8a;">15:00</span><div style="left:147px;top:353px;width:39px;height:1px;background:#6e6e6e;"></div><div style="left:169px;top:376px;width:17px;height:1px;background:#6e6e6e;"></div><div style="left:169px;top:399px;width:17px;height:1px;background:#6e6e6e;"></div><div style="left:169px;top:422px;width:17px;height:1px;background:#6e6e6e;"></div><div style="left:147px;top:445px;width:39px;height:1px;background:#6e6e6e;"></div><div style="left:169px;top:468px;width:17px;height:1px;background:#6e6e6e;"></div><div style="left:169px;top:491px;width:17px;height:1px;background:#6e6e6e;"></div><div style="left:169px;top:514px;width:17px;height:1px;background:#6e6e6e;"></div><div style="left:147px;top:537px;width:39px;height:1px;background:#6e6e6e;"></div><div style="left:169px;top:560px;width:17px;height:1px;background:#6e6e6e;"></div><div style="left:169px;top:583px;width:17px;height:1px;background:#6e6e6e;"></div><div style="left:169px;top:606px;width:17px;height:1px;background:#6e6e6e;"></div><div style="left:147px;top:629px;width:39px;height:1px;background:#6e6e6e;"></div><div style="left:169px;top:652px;width:17px;height:1px;background:#6e6e6e;"></div><div style="left:169px;top:675px;width:17px;height:1px;background:#6e6e6e;"></div><div style="left:169px;top:698px;width:17px;height:1px;background:#6e6e6e;"></div><div style="left:147px;top:721px;width:39px;height:1px;background:#6e6e6e;"></div><div style="left:169px;top:744px;width:17px;height:1px;background:#6e6e6e;"></div><div style="left:169px;top:767px;width:17px;height:1px;background:#6e6e6e;"></div><div style="left:169px;top:790px;width:17px;height:1px;background:#6e6e6e;"></div><div style="left:147px;top:813px;width:39px;height:1px;background:#6e6e6e;"></div><div style="left:169px;top:836px;width:17px;height:1px;background:#6e6e6e;"></div><div style="left:169px;top:859px;width:17px;height:1px;background:#6e6e6e;"></div><div style="left:169px;top:882px;width:17px;height:1px;background:#6e6e6e;"></div><div style="left:147px;top:905px;width:39px;height:1px;background:#6e6e6e;"></div><div style="left:169px;top:928px;width:17px;height:1px;background:#6e6e6e;"></div><div style="left:169px;top:951px;width:17px;height:1px;background:#6e6e6e;"></div><div style="left:169px;top:974px;width:17px;height:1px;background:#6e6e6e;"></div><div style="left:147px;top:997px;width:39px;height:1px;background:#6e6e6e;"></div><div style="left:169px;top:1020px;width:17px;height:1px;background:#6e6e6e;"></div><div style="left:147px;top:592px;width:43px;height:13px;background:linear-gradient(rgba(248,196,104,0),rgba(248,196,104,.3) 40%,#f6c262);"></div><div style="left:147px;top:605px;width:43px;height:1px;background:#dc7a12;"></div><span class="t" style="left:155.00px;top:588px;font-size:11px;line-height:14px;color:#8a8a8a;">10:30</span><div style="left:191px;top:537px;width:186px;height:46px;background:#8eadd9;border:2px solid #000;border-radius:6px;box-sizing:border-box;"></div><span class="t" style="left:198.00px;top:542px;font-size:10px;line-height:13px;color:#000;font-weight:bold;transform:scaleX(1.1949);">TEST I (01.01.2004) - Trifoglio</span><span class="t" style="left:198.00px;top:555px;font-size:10px;line-height:13px;color:#000;font-weight:bold;transform:scaleX(1.2236);">Ouraga N°16086</span><div style="left:282px;top:535px;width:5px;height:5px;background:#fff;border:1px solid #000;box-sizing:border-box;"></div><div style="left:282px;top:580px;width:5px;height:5px;background:#fff;border:1px solid #000;box-sizing:border-box;"></div><div style="left:584px;top:287px;width:16px;height:734px;background:#f0f0f0;"></div><svg style="left:587px;top:293px;" width="10" height="7" viewBox="0 0 10 7"><path d="M1.2 5.6L5 1.6L8.8 5.6" fill="none" stroke="#505050" stroke-width="2"/></svg><svg style="left:587px;top:1009px;" width="10" height="7" viewBox="0 0 10 7"><path d="M1.2 1.4L5 5.4L8.8 1.4" fill="none" stroke="#505050" stroke-width="2"/></svg><div style="left:584px;top:538px;width:16px;height:211px;background:#cdcdcd;"></div><div style="left:604px;top:214px;width:1269px;height:52px;background:#4a80b9;"></div><span class="t" style="left:607.50px;top:217px;font-size:17.5px;line-height:22px;color:#fff;transform:scaleX(0.8720);">TEST</span><div style="left:658px;top:221px;width:2px;height:13px;background:#fff;"></div><span class="t" style="left:681.00px;top:217px;font-size:17.5px;line-height:22px;color:#fff;transform:scaleX(1.0049);">01.01.2004</span><span class="t" style="left:608.00px;top:243px;font-size:12px;line-height:16px;color:#fff;transform:scaleX(0.9651);">Dr Trifoglio</span><span class="t" style="left:737.00px;top:243px;font-size:12px;line-height:16px;color:#fff;transform:scaleX(0.8689);">16086</span><svg style="left:1844px;top:223px;" width="26" height="25" viewBox="0 0 26 25"><ellipse cx="13" cy="21.6" rx="12" ry="2.6" fill="#2d4f78" opacity=".55"/><path d="M3 20.6L5.4 5L11 2.2L12 20.8Z" fill="#b9b9b9"/><path d="M11 2.2L18.4 4.4L22.6 19.6L12 20.8Z" fill="#e9e9e9"/><path d="M12.2 6.4l7 1.2M12.3 9.4l7.8 1.1M12.4 12.4l8.6 1M12.5 15.4l9.4 0.9M12.6 18.2l10 .6" stroke="#8a8a8a" stroke-width="1"/><path d="M5 8.4l6-1.4M4.6 11.4l6.6-1.2M4.2 14.4l7-1M3.8 17.4l7.6-.8" stroke="#7a7a7a" stroke-width="1"/></svg><div style="left:1874px;top:215px;width:45px;height:50px;border:1px solid #b4b9c2;border-radius:4px;box-sizing:border-box;background:linear-gradient(#e9ecf2 0%,#dfe3ea 20%,#d5dae3 38%,#dfe3ea 60%,#e9ecf0 100%);"></div><svg style="left:1888px;top:231px;" width="16" height="17" viewBox="0 0 16 17"><path d="M5 2.6h6.4l3 3v10H5z" fill="#fff" stroke="#3558a8" stroke-width="1"/><path d="M11.4 2.6v3h3" fill="#dfe6f4" stroke="#3558a8" stroke-width="0.9"/><path d="M7 9.6h5.6M7 11.6h5.6M7 13.6h5.6" stroke="#3e6be0" stroke-width="0.9"/><path d="M1.6 0.8C0.6 4 1.6 6.4 4.4 6.9" fill="none" stroke="#4a7be8" stroke-width="1.5"/><path d="M4 4.2L8.6 7L4 9.8Z" fill="#2f63d8"/></svg><div style="left:604px;top:293px;width:1314px;height:727px;background:#f0f0f0;border:1px solid #b2b2b2;box-sizing:border-box;"></div><div style="left:605px;top:294px;width:1312px;height:35px;background:#fff;"></div><span class="t" style="left:613.00px;top:276px;font-size:12px;line-height:16px;color:#000;transform:scaleX(0.9202);">PATIENT</span><span class="t" style="left:674.00px;top:276px;font-size:12px;line-height:16px;color:#000;transform:scaleX(0.8972);">ASSURANCE</span><span class="t" style="left:756.00px;top:276px;font-size:12px;line-height:16px;color:#000;transform:scaleX(0.9182);">DOCUMENTS</span><span class="t" style="left:958.00px;top:276px;font-size:12px;line-height:16px;color:#000;transform:scaleX(0.9189);">ORDONNANCES</span><span class="t" style="left:1060.00px;top:276px;font-size:12px;line-height:16px;color:#000;transform:scaleX(0.8999);">TRAITEMENT</span><span class="t" style="left:1146.00px;top:276px;font-size:12px;line-height:16px;color:#000;transform:scaleX(0.9077);">LISTE DES RENDEZ-VOUS</span><div style="left:832px;top:271px;width:121px;height:23px;background:#fff;border:1px solid #acacac;box-sizing:border-box;border-bottom:none;"></div><div style="left:835px;top:274px;width:115px;height:18px;border:1px dotted #000;box-sizing:border-box;"></div><span class="t" style="left:842.00px;top:274px;font-size:12px;line-height:16px;color:#000;transform:scaleX(0.9033);">DOSSIER MEDICAL</span><div style="left:606px;top:295px;width:73px;height:33px;border:1px solid #acacac;box-sizing:border-box;background:linear-gradient(#f0f0f0,#ebebeb 45%,#e3e3e3);"></div><span class="t" style="left:620.50px;top:303px;font-size:12px;line-height:16px;color:#000;transform:scaleX(0.9162);">Maladies</span><div style="left:681px;top:295px;width:73px;height:33px;border:1px solid #acacac;box-sizing:border-box;background:linear-gradient(#f0f0f0,#ebebeb 45%,#e3e3e3);"></div><span class="t" style="left:701.00px;top:297px;font-size:12px;line-height:16px;color:#000;transform:scaleX(0.8992);">Signes</span><span class="t" style="left:702.50px;top:309px;font-size:12px;line-height:16px;color:#000;transform:scaleX(0.9057);">Vitaux</span><div style="left:756px;top:295px;width:73px;height:33px;border:1px solid #acacac;box-sizing:border-box;background:linear-gradient(#f0f0f0,#ebebeb 45%,#e3e3e3);"></div><span class="t" style="left:775.00px;top:303px;font-size:12px;line-height:16px;color:#000;transform:scaleX(0.9543);">Dessin</span><div style="left:831px;top:295px;width:73px;height:33px;border:1px solid #acacac;box-sizing:border-box;background:linear-gradient(#f0f0f0,#ebebeb 45%,#e3e3e3);"></div><span class="t" style="left:841.00px;top:303px;font-size:12px;line-height:16px;color:#000;transform:scaleX(0.9315);">Traitement</span><div style="left:906px;top:295px;width:73px;height:33px;border:1px solid #acacac;box-sizing:border-box;background:linear-gradient(#f0f0f0,#ebebeb 45%,#e3e3e3);"></div><span class="t" style="left:931.50px;top:303px;font-size:12px;line-height:16px;color:#000;transform:scaleX(0.9157);">Plan</span><div style="left:981px;top:295px;width:73px;height:33px;border:1px solid #acacac;box-sizing:border-box;background:linear-gradient(#f0f0f0,#ebebeb 45%,#e3e3e3);"></div><span class="t" style="left:1001.50px;top:297px;font-size:12px;line-height:16px;color:#000;transform:scaleX(0.9229);">Autres</span><span class="t" style="left:986.00px;top:309px;font-size:12px;line-height:16px;color:#000;transform:scaleX(0.9445);">investigation</span><div style="left:1056px;top:295px;width:73px;height:33px;border:1px solid #acacac;box-sizing:border-box;background:linear-gradient(#f0f0f0,#ebebeb 45%,#e3e3e3);"></div><span class="t" style="left:1080.50px;top:303px;font-size:12px;line-height:16px;color:#000;transform:scaleX(0.8989);">Labo</span><div style="left:1131px;top:295px;width:73px;height:33px;border:1px solid #acacac;box-sizing:border-box;background:linear-gradient(#f0f0f0,#ebebeb 45%,#e3e3e3);"></div><span class="t" style="left:1148.50px;top:297px;font-size:12px;line-height:16px;color:#000;transform:scaleX(0.9042);">Note de</span><span class="t" style="left:1139.50px;top:309px;font-size:12px;line-height:16px;color:#000;transform:scaleX(0.9496);">l'assistante</span><div style="left:1206px;top:295px;width:73px;height:33px;border:1px solid #acacac;box-sizing:border-box;background:linear-gradient(#f0f0f0,#ebebeb 45%,#e3e3e3);"></div><span class="t" style="left:1229.00px;top:303px;font-size:12px;line-height:16px;color:#000;transform:scaleX(0.9416);">Mixte</span><div style="left:1281px;top:295px;width:73px;height:33px;border:1px solid #acacac;box-sizing:border-box;background:linear-gradient(#f0f0f0,#ebebeb 45%,#e3e3e3);"></div><span class="t" style="left:1292.00px;top:303px;font-size:12px;line-height:16px;color:#000;transform:scaleX(0.9324);">CheckBox</span><div style="left:1356px;top:295px;width:73px;height:33px;border:1px solid #acacac;box-sizing:border-box;background:linear-gradient(#f0f0f0,#ebebeb 45%,#e3e3e3);"></div><span class="t" style="left:1361.50px;top:303px;font-size:12px;line-height:16px;color:#000;transform:scaleX(0.9295);">Consultation</span><div style="left:606px;top:330px;width:446px;height:30px;border:1px solid #c3cad6;border-radius:6px;box-sizing:border-box;background:linear-gradient(#e3e8f1,#f3f5f9 60%,#eef1f6);"></div><div style="left:614px;top:335px;width:121px;height:21px;border:1px solid #acacac;box-sizing:border-box;background:linear-gradient(#f0f0f0,#e4e4e4);"></div><svg style="left:722px;top:342px;" width="9" height="7" viewBox="0 0 9 7"><path d="M1 1.2L4.5 5L8 1.2" fill="none" stroke="#444" stroke-width="1.7"/></svg><div style="left:741px;top:335px;width:131px;height:21px;background:#fff;border:1px solid #bdbdbd;box-sizing:border-box;"></div><div style="left:879px;top:335px;width:73px;height:21px;border:1px solid #acacac;box-sizing:border-box;background:linear-gradient(#f0f0f0,#ebebeb 45%,#e3e3e3);"></div><span class="t" style="left:900.50px;top:337px;font-size:12px;line-height:16px;color:#000;transform:scaleX(0.9788);">Filtrer</span><svg style="left:1022px;top:336px;" width="22" height="19" viewBox="0 0 22 19"><rect x="6" y="0.8" width="10" height="6" fill="#fff" stroke="#8a8f98" stroke-width="1"/><rect x="5" y="5" width="12" height="3" fill="#4f80c0"/><path d="M1 7.4h20v8h-4v-3h-12v3h-4z" fill="#747a84"/><circle cx="18.6" cy="10" r="0.8" fill="#fff"/><rect x="5.6" y="12" width="10.8" height="6.2" fill="#fff" stroke="#747a84" stroke-width="1"/><path d="M7.4 14.2h7.2M7.4 16.2h7.2" stroke="#3f7fd0" stroke-width="0.9"/></svg><div style="left:605px;top:361px;width:431px;height:24px;background:#e4e4e4;overflow:hidden;"></div><svg style="left:608px;top:361px;" width="24" height="23" viewBox="0 0 24 23"><path d="M1.6 5.4L15.4 1L21.4 17.2L8 21.8Z" fill="#ececec" stroke="#9a9a9a" stroke-width="0.8"/><path d="M1.6 5.4L15.4 1L16.8 4.8L3 9.2Z" fill="#f7cf2e"/><path d="M4.6 11.6l10.6-3.4M5.8 14.8l10.6-3.4M7 18l7-2.2" stroke="#7d7d7d" stroke-width="2"/><path d="M9 17.6L21 6.2L23.4 8.4L11.2 19.8L8 20.8Z" fill="#aeb6c2" stroke="#5a626e" stroke-width="0.7"/><path d="M9 17.6L11.2 19.8L8 20.8Z" fill="#3a3a3a"/></svg><span class="t" style="left:638.00px;top:363px;font-size:14px;line-height:18px;color:#111;transform:scaleX(0.9133);">30.03.2014</span><span class="t" style="left:976.50px;top:367px;font-size:10px;line-height:13px;color:#111;transform:scaleX(0.9164);">Signes vitaux</span><span class="t" style="left:610.00px;top:389px;font-size:12px;line-height:16px;color:#000;transform:scaleX(0.9667);">Taille [cm] :</span><span class="t" style="left:761.50px;top:389px;font-size:12px;line-height:16px;color:#000;transform:scaleX(0.8961);">Poids [Kg] :</span><div style="left:704px;top:389px;width:49px;height:15px;background:#fff;"></div><div style="left:855px;top:389px;width:49px;height:15px;background:#fff;"></div><span class="t" style="left:912.50px;top:389px;font-size:12px;line-height:16px;color:#000;transform:scaleX(0.8718);">IMC :</span><div style="left:975px;top:389px;width:49px;height:15px;background:#90ee90;"></div><span class="t" style="left:732.00px;top:389px;font-size:12px;line-height:16px;color:#000;transform:scaleX(0.9488);">185</span><span class="t" style="left:890.00px;top:389px;font-size:12px;line-height:16px;color:#000;transform:scaleX(0.9363);">85</span><span class="t" style="left:983.50px;top:388px;font-size:12px;line-height:16px;color:#000;transform:scaleX(0.8876);">24.8356</span><span class="t" style="left:610.00px;top:407px;font-size:12px;line-height:16px;color:#000;transform:scaleX(0.9204);">Fréq. cardiaque :</span><span class="t" style="left:761.50px;top:407px;font-size:12px;line-height:16px;color:#000;transform:scaleX(0.9211);">Temp. corp. [C°] :</span><div style="left:704px;top:407px;width:49px;height:15px;background:#fff;"></div><div style="left:855px;top:407px;width:49px;height:15px;background:#fff;"></div><span class="t" style="left:912.50px;top:407px;font-size:12px;line-height:16px;color:#000;transform:scaleX(0.9119);">Fréq. resp. :</span><div style="left:975px;top:407px;width:49px;height:15px;background:#fff;"></div><span class="t" style="left:747.00px;top:407px;font-size:12px;line-height:16px;color:#000;">-</span><span class="t" style="left:898.50px;top:407px;font-size:12px;line-height:16px;color:#000;">-</span><span class="t" style="left:1017.00px;top:407px;font-size:12px;line-height:16px;color:#000;">-</span><span class="t" style="left:610.00px;top:425px;font-size:12px;line-height:16px;color:#000;transform:scaleX(0.9448);">Tension art. diast :</span><span class="t" style="left:761.50px;top:425px;font-size:12px;line-height:16px;color:#000;transform:scaleX(0.9462);">Tension art. syst. :</span><div style="left:704px;top:425px;width:49px;height:15px;background:#fff;"></div><div style="left:855px;top:425px;width:49px;height:15px;background:#fff;"></div><span class="t" style="left:747.00px;top:425px;font-size:12px;line-height:16px;color:#000;">-</span><span class="t" style="left:898.50px;top:425px;font-size:12px;line-height:16px;color:#000;">-</span><div style="left:605px;top:451px;width:431px;height:24px;background:#e4e4e4;overflow:hidden;"></div><svg style="left:608px;top:451px;" width="24" height="23" viewBox="0 0 24 23"><path d="M1.6 5.4L15.4 1L21.4 17.2L8 21.8Z" fill="#ececec" stroke="#9a9a9a" stroke-width="0.8"/><path d="M1.6 5.4L15.4 1L16.8 4.8L3 9.2Z" fill="#f7cf2e"/><path d="M4.6 11.6l10.6-3.4M5.8 14.8l10.6-3.4M7 18l7-2.2" stroke="#7d7d7d" stroke-width="2"/><path d="M9 17.6L21 6.2L23.4 8.4L11.2 19.8L8 20.8Z" fill="#aeb6c2" stroke="#5a626e" stroke-width="0.7"/><path d="M9 17.6L11.2 19.8L8 20.8Z" fill="#3a3a3a"/></svg><span class="t" style="left:638.00px;top:453px;font-size:14px;line-height:18px;color:#111;transform:scaleX(0.9133);">28.03.2014</span><span class="t" style="left:994.00px;top:457px;font-size:10px;line-height:13px;color:#111;transform:scaleX(0.9244);">Maladies</span><div style="left:608px;top:478px;width:425px;height:38px;background:#fff;"></div><span class="t" style="left:611.00px;top:479px;font-size:13px;line-height:17px;color:#000;font-weight:bold;transform:scaleX(0.9669);">TRAITEMENT</span><span class="t" style="left:611.00px;top:494px;font-size:12px;line-height:16px;color:#000;">5</span><div style="left:605px;top:526px;width:431px;height:24px;background:#e4e4e4;overflow:hidden;"></div><svg style="left:608px;top:526px;" width="24" height="23" viewBox="0 0 24 23"><path d="M1.6 5.4L15.4 1L21.4 17.2L8 21.8Z" fill="#ececec" stroke="#9a9a9a" stroke-width="0.8"/><path d="M1.6 5.4L15.4 1L16.8 4.8L3 9.2Z" fill="#f7cf2e"/><path d="M4.6 11.6l10.6-3.4M5.8 14.8l10.6-3.4M7 18l7-2.2" stroke="#7d7d7d" stroke-width="2"/><path d="M9 17.6L21 6.2L23.4 8.4L11.2 19.8L8 20.8Z" fill="#aeb6c2" stroke="#5a626e" stroke-width="0.7"/><path d="M9 17.6L11.2 19.8L8 20.8Z" fill="#3a3a3a"/></svg><span class="t" style="left:638.00px;top:528px;font-size:14px;line-height:18px;color:#111;transform:scaleX(0.9133);">27.03.2014</span><span class="t" style="left:976.50px;top:532px;font-size:10px;line-height:13px;color:#111;transform:scaleX(0.9164);">Signes vitaux</span><span class="t" style="left:610.00px;top:554px;font-size:12px;line-height:16px;color:#000;transform:scaleX(0.9667);">Taille [cm] :</span><span class="t" style="left:761.50px;top:554px;font-size:12px;line-height:16px;color:#000;transform:scaleX(0.8961);">Poids [Kg] :</span><div style="left:704px;top:554px;width:49px;height:15px;background:#fff;"></div><div style="left:855px;top:554px;width:49px;height:15px;background:#fff;"></div><span class="t" style="left:912.50px;top:554px;font-size:12px;line-height:16px;color:#000;transform:scaleX(0.8718);">IMC :</span><div style="left:975px;top:554px;width:49px;height:15px;background:#ffa31a;"></div><span class="t" style="left:732.00px;top:554px;font-size:12px;line-height:16px;color:#000;transform:scaleX(0.9488);">185</span><span class="t" style="left:890.00px;top:554px;font-size:12px;line-height:16px;color:#000;transform:scaleX(0.9363);">90</span><span class="t" style="left:983.50px;top:553px;font-size:12px;line-height:16px;color:#000;transform:scaleX(0.8876);">26.2965</span><span class="t" style="left:610.00px;top:572px;font-size:12px;line-height:16px;color:#000;transform:scaleX(0.9204);">Fréq. cardiaque :</span><span class="t" style="left:761.50px;top:572px;font-size:12px;line-height:16px;color:#000;transform:scaleX(0.9211);">Temp. corp. [C°] :</span><div style="left:704px;top:572px;width:49px;height:15px;background:#fff;"></div><div style="left:855px;top:572px;width:49px;height:15px;background:#fff;"></div><span class="t" style="left:912.50px;top:572px;font-size:12px;line-height:16px;color:#000;transform:scaleX(0.9119);">Fréq. resp. :</span><div style="left:975px;top:572px;width:49px;height:15px;background:#fff;"></div><span class="t" style="left:747.00px;top:572px;font-size:12px;line-height:16px;color:#000;">-</span><span class="t" style="left:898.50px;top:572px;font-size:12px;line-height:16px;color:#000;">-</span><span class="t" style="left:1017.00px;top:572px;font-size:12px;line-height:16px;color:#000;">-</span><span class="t" style="left:610.00px;top:590px;font-size:12px;line-height:16px;color:#000;transform:scaleX(0.9448);">Tension art. diast :</span><span class="t" style="left:761.50px;top:590px;font-size:12px;line-height:16px;color:#000;transform:scaleX(0.9462);">Tension art. syst. :</span><div style="left:704px;top:590px;width:49px;height:15px;background:#fff;"></div><div style="left:855px;top:590px;width:49px;height:15px;background:#fff;"></div><span class="t" style="left:747.00px;top:590px;font-size:12px;line-height:16px;color:#000;">-</span><span class="t" style="left:898.50px;top:590px;font-size:12px;line-height:16px;color:#000;">-</span><div style="left:605px;top:616px;width:431px;height:24px;background:#e4e4e4;overflow:hidden;"></div><svg style="left:608px;top:616px;" width="24" height="23" viewBox="0 0 24 23"><path d="M1.6 5.4L15.4 1L21.4 17.2L8 21.8Z" fill="#ececec" stroke="#9a9a9a" stroke-width="0.8"/><path d="M1.6 5.4L15.4 1L16.8 4.8L3 9.2Z" fill="#f7cf2e"/><path d="M4.6 11.6l10.6-3.4M5.8 14.8l10.6-3.4M7 18l7-2.2" stroke="#7d7d7d" stroke-width="2"/><path d="M9 17.6L21 6.2L23.4 8.4L11.2 19.8L8 20.8Z" fill="#aeb6c2" stroke="#5a626e" stroke-width="0.7"/><path d="M9 17.6L11.2 19.8L8 20.8Z" fill="#3a3a3a"/></svg><span class="t" style="left:638.00px;top:618px;font-size:14px;line-height:18px;color:#111;transform:scaleX(0.9133);">27.03.2014</span><span class="t" style="left:994.00px;top:622px;font-size:10px;line-height:13px;color:#111;transform:scaleX(0.9244);">Maladies</span><div style="left:608px;top:643px;width:425px;height:38px;background:#fff;"></div><span class="t" style="left:611.00px;top:644px;font-size:13px;line-height:17px;color:#000;font-weight:bold;transform:scaleX(0.9883);">NOTE DE L'ASSISTANTE</span><span class="t" style="left:611.00px;top:659px;font-size:12px;line-height:16px;color:#000;transform:scaleX(1.0679);">A téléphoné et a mal a la tête</span><div style="left:605px;top:691px;width:431px;height:24px;background:#e4e4e4;overflow:hidden;"></div><svg style="left:608px;top:691px;" width="24" height="23" viewBox="0 0 24 23"><path d="M1.6 5.4L15.4 1L21.4 17.2L8 21.8Z" fill="#ececec" stroke="#9a9a9a" stroke-width="0.8"/><path d="M1.6 5.4L15.4 1L16.8 4.8L3 9.2Z" fill="#f7cf2e"/><path d="M4.6 11.6l10.6-3.4M5.8 14.8l10.6-3.4M7 18l7-2.2" stroke="#7d7d7d" stroke-width="2"/><path d="M9 17.6L21 6.2L23.4 8.4L11.2 19.8L8 20.8Z" fill="#aeb6c2" stroke="#5a626e" stroke-width="0.7"/><path d="M9 17.6L11.2 19.8L8 20.8Z" fill="#3a3a3a"/></svg><span class="t" style="left:638.00px;top:693px;font-size:14px;line-height:18px;color:#111;transform:scaleX(0.9133);">27.03.2014</span><span class="t" style="left:994.00px;top:697px;font-size:10px;line-height:13px;color:#111;transform:scaleX(0.9244);">Maladies</span><div style="left:608px;top:718px;width:425px;height:122px;background:#fff;"></div><span class="t" style="left:611.00px;top:719px;font-size:13px;line-height:17px;color:#000;font-weight:bold;transform:scaleX(0.9692);">SUBJECTIF</span><span class="t" style="left:611.00px;top:734px;font-size:12px;line-height:16px;color:#000;transform:scaleX(1.0587);">Voici notre patient</span><span class="t" style="left:611.00px;top:761px;font-size:13px;line-height:17px;color:#000;font-weight:bold;transform:scaleX(0.9802);">OBJECTIF</span><span class="t" style="left:611.00px;top:776px;font-size:12px;line-height:16px;color:#000;">etc</span><span class="t" style="left:611.00px;top:803px;font-size:13px;line-height:17px;color:#000;font-weight:bold;transform:scaleX(0.9847);">SYNTHÈSE</span><span class="t" style="left:611.00px;top:818px;font-size:12px;line-height:16px;color:#000;transform:scaleX(1.0221);">et etc</span><div style="left:605px;top:850px;width:431px;height:24px;background:#e4e4e4;overflow:hidden;"></div><svg style="left:608px;top:850px;" width="24" height="23" viewBox="0 0 24 23"><path d="M1.6 5.4L15.4 1L21.4 17.2L8 21.8Z" fill="#ececec" stroke="#9a9a9a" stroke-width="0.8"/><path d="M1.6 5.4L15.4 1L16.8 4.8L3 9.2Z" fill="#f7cf2e"/><path d="M4.6 11.6l10.6-3.4M5.8 14.8l10.6-3.4M7 18l7-2.2" stroke="#7d7d7d" stroke-width="2"/><path d="M9 17.6L21 6.2L23.4 8.4L11.2 19.8L8 20.8Z" fill="#aeb6c2" stroke="#5a626e" stroke-width="0.7"/><path d="M9 17.6L11.2 19.8L8 20.8Z" fill="#3a3a3a"/></svg><span class="t" style="left:638.00px;top:852px;font-size:14px;line-height:18px;color:#111;transform:scaleX(0.9133);">27.03.2014</span><span class="t" style="left:994.00px;top:856px;font-size:10px;line-height:13px;color:#111;transform:scaleX(0.9244);">Maladies</span><div style="left:608px;top:877px;width:425px;height:38px;background:#fff;"></div><span class="t" style="left:611.00px;top:878px;font-size:13px;line-height:17px;color:#000;font-weight:bold;transform:scaleX(0.9322);">PLAN</span><span class="t" style="left:611.00px;top:893px;font-size:12px;line-height:16px;color:#000;">4</span><div style="left:605px;top:925px;width:431px;height:24px;background:#e4e4e4;overflow:hidden;"></div><svg style="left:608px;top:925px;" width="24" height="23" viewBox="0 0 24 23"><path d="M1.6 5.4L15.4 1L21.4 17.2L8 21.8Z" fill="#ececec" stroke="#9a9a9a" stroke-width="0.8"/><path d="M1.6 5.4L15.4 1L16.8 4.8L3 9.2Z" fill="#f7cf2e"/><path d="M4.6 11.6l10.6-3.4M5.8 14.8l10.6-3.4M7 18l7-2.2" stroke="#7d7d7d" stroke-width="2"/><path d="M9 17.6L21 6.2L23.4 8.4L11.2 19.8L8 20.8Z" fill="#aeb6c2" stroke="#5a626e" stroke-width="0.7"/><path d="M9 17.6L11.2 19.8L8 20.8Z" fill="#3a3a3a"/></svg><span class="t" style="left:638.00px;top:927px;font-size:14px;line-height:18px;color:#111;transform:scaleX(0.9133);">27.03.2014</span><span class="t" style="left:994.00px;top:931px;font-size:10px;line-height:13px;color:#111;transform:scaleX(0.9244);">Maladies</span><div style="left:608px;top:952px;width:425px;height:38px;background:#fff;"></div><span class="t" style="left:611.00px;top:953px;font-size:13px;line-height:17px;color:#000;font-weight:bold;transform:scaleX(0.9887);">AUTRES INVESTIGATIONS</span><span class="t" style="left:611.00px;top:968px;font-size:12px;line-height:16px;color:#000;">3</span><div style="left:605px;top:1000px;width:431px;height:19px;background:#e4e4e4;overflow:hidden;"></div><svg style="left:608px;top:1000px;" width="24" height="23" viewBox="0 0 24 23"><path d="M1.6 5.4L15.4 1L21.4 17.2L8 21.8Z" fill="#ececec" stroke="#9a9a9a" stroke-width="0.8"/><path d="M1.6 5.4L15.4 1L16.8 4.8L3 9.2Z" fill="#f7cf2e"/><path d="M4.6 11.6l10.6-3.4M5.8 14.8l10.6-3.4M7 18l7-2.2" stroke="#7d7d7d" stroke-width="2"/><path d="M9 17.6L21 6.2L23.4 8.4L11.2 19.8L8 20.8Z" fill="#aeb6c2" stroke="#5a626e" stroke-width="0.7"/><path d="M9 17.6L11.2 19.8L8 20.8Z" fill="#3a3a3a"/></svg><span class="t" style="left:638.00px;top:1002px;font-size:14px;line-height:18px;color:#111;transform:scaleX(0.9133);">27.03.2014</span><span class="t" style="left:994.00px;top:1006px;font-size:10px;line-height:13px;color:#111;transform:scaleX(0.9244);">Maladies</span><div style="left:1037px;top:361px;width:15px;height:658px;background:#f0f0f0;"></div><svg style="left:1040px;top:367px;" width="10" height="7" viewBox="0 0 10 7"><path d="M1.2 5.6L5 1.6L8.8 5.6" fill="none" stroke="#505050" stroke-width="2"/></svg><svg style="left:1040px;top:1007px;" width="10" height="7" viewBox="0 0 10 7"><path d="M1.2 1.4L5 5.4L8.8 1.4" fill="none" stroke="#505050" stroke-width="2"/></svg><div style="left:1037px;top:379px;width:15px;height:53px;background:#cdcdcd;"></div><div style="left:1053px;top:336px;width:237px;height:364px;border:1px solid #dcdcdc;box-sizing:border-box;"></div><div style="left:1059px;top:330px;width:48px;height:13px;background:#f0f0f0;"></div><span class="t" style="left:1062.00px;top:328px;font-size:12px;line-height:16px;color:#000;transform:scaleX(0.8537);">Maladies</span><div style="left:1292px;top:336px;width:626px;height:364px;border:1px solid #dcdcdc;box-sizing:border-box;"></div><div style="left:1296px;top:330px;width:110px;height:13px;background:#f0f0f0;"></div><span class="t" style="left:1299.00px;top:328px;font-size:12px;line-height:16px;color:#000;transform:scaleX(0.8822);">Liste des antécédents</span><div style="left:1053px;top:706px;width:865px;height:312px;border:1px solid #dcdcdc;box-sizing:border-box;"></div><div style="left:1059px;top:700px;width:46px;height:13px;background:#f0f0f0;"></div><span class="t" style="left:1062.00px;top:699px;font-size:12px;line-height:16px;color:#000;transform:scaleX(0.8474);">Allergies</span><div style="left:1297px;top:349px;width:613px;height:344px;background:#fff;border:1px solid #82878f;box-sizing:border-box;"></div><div style="left:1298px;top:368px;width:611px;height:1px;background:#e6ecf4;"></div><div style="left:1319px;top:350px;width:1px;height:18px;background:#e2e8f1;"></div><div style="left:1404px;top:350px;width:1px;height:18px;background:#e2e8f1;"></div><div style="left:1489px;top:350px;width:1px;height:18px;background:#e2e8f1;"></div><div style="left:1574px;top:350px;width:1px;height:18px;background:#e2e8f1;"></div><div style="left:1604px;top:350px;width:1px;height:18px;background:#e2e8f1;"></div><div style="left:1634px;top:350px;width:1px;height:18px;background:#e2e8f1;"></div><div style="left:1719px;top:350px;width:1px;height:18px;background:#e2e8f1;"></div><div style="left:1804px;top:350px;width:1px;height:18px;background:#e2e8f1;"></div><div style="left:1889px;top:350px;width:1px;height:18px;background:#e2e8f1;"></div><span class="t" style="left:1326.00px;top:352px;font-size:12px;line-height:16px;color:#000;transform:scaleX(0.9073);">Date</span><span class="t" style="left:1411.00px;top:352px;font-size:12px;line-height:16px;color:#000;transform:scaleX(0.9606);">Type</span><span class="t" style="left:1496.00px;top:352px;font-size:12px;line-height:16px;color:#000;transform:scaleX(0.9082);">Nom</span><span class="t" style="left:1581.00px;top:351px;font-size:12px;line-height:16px;color:#000;transform:scaleX(0.9726);">Val</span><span class="t" style="left:1611.00px;top:351px;font-size:12px;line-height:16px;color:#000;transform:scaleX(0.8889);">Uni</span><span class="t" style="left:1641.00px;top:352px;font-size:12px;line-height:16px;color:#000;">Text</span><span class="t" style="left:1726.00px;top:352px;font-size:12px;line-height:16px;color:#000;transform:scaleX(0.9202);">Prélèvement</span><span class="t" style="left:1811.00px;top:351px;font-size:12px;line-height:16px;color:#000;transform:scaleX(0.9123);">Mode de prélè</span><span class="t" style="left:1324.00px;top:371px;font-size:12px;line-height:16px;color:#000;transform:scaleX(0.9125);">02.04.2011</span><span class="t" style="left:1494.00px;top:371px;font-size:12px;line-height:16px;color:#000;transform:scaleX(0.9256);">psa long</span><span class="t" style="left:1579.00px;top:371px;font-size:12px;line-height:16px;color:#000;transform:scaleX(0.9295);">5.6</span><span class="t" style="left:1609.00px;top:370px;font-size:12px;line-height:16px;color:#000;transform:scaleX(0.8622);">mo...</span><span class="t" style="left:1723.70px;top:371px;font-size:12px;line-height:16px;color:#000;transform:scaleX(0.8931);">Patho</span><span class="t" style="left:1808.70px;top:371px;font-size:12px;line-height:16px;color:#000;transform:scaleX(0.9513);">Excision</span><span class="t" style="left:1324.00px;top:389px;font-size:12px;line-height:16px;color:#000;transform:scaleX(0.9125);">02.04.2011</span><span class="t" style="left:1409.00px;top:389px;font-size:12px;line-height:16px;color:#000;transform:scaleX(0.9332);">DOO</span><span class="t" style="left:1494.00px;top:388px;font-size:12px;line-height:16px;color:#000;transform:scaleX(0.9033);">25-OH-Vitami...</span><span class="t" style="left:1579.00px;top:389px;font-size:12px;line-height:16px;color:#000;transform:scaleX(0.8989);">74</span><span class="t" style="left:1609.00px;top:388px;font-size:12px;line-height:16px;color:#000;transform:scaleX(0.8622);">nm...</span><span class="t" style="left:1639.00px;top:389px;font-size:12px;line-height:16px;color:#000;transform:scaleX(0.9158);">Commentaires:</span><span class="t" style="left:1723.70px;top:389px;font-size:12px;line-height:16px;color:#000;transform:scaleX(0.8931);">Patho</span><span class="t" style="left:1808.70px;top:389px;font-size:12px;line-height:16px;color:#000;transform:scaleX(0.9513);">Excision</span><span class="t" style="left:1324.00px;top:407px;font-size:12px;line-height:16px;color:#000;transform:scaleX(0.8993);">27.03.2013</span><span class="t" style="left:1409.00px;top:406px;font-size:12px;line-height:16px;color:#000;transform:scaleX(0.8562);">CHIMIE  CLINI...</span><span class="t" style="left:1494.00px;top:407px;font-size:12px;line-height:16px;color:#000;transform:scaleX(0.9324);">Créatinine</span><span class="t" style="left:1579.00px;top:407px;font-size:12px;line-height:16px;color:#000;transform:scaleX(0.8989);">78</span><span class="t" style="left:1609.00px;top:406px;font-size:12px;line-height:16px;color:#000;transform:scaleX(0.8550);">µm...</span><span class="t" style="left:1723.70px;top:407px;font-size:12px;line-height:16px;color:#000;transform:scaleX(0.8931);">Patho</span><span class="t" style="left:1808.70px;top:407px;font-size:12px;line-height:16px;color:#000;transform:scaleX(0.9513);">Excision</span><span class="t" style="left:1324.00px;top:425px;font-size:12px;line-height:16px;color:#000;transform:scaleX(0.8993);">27.03.2013</span><span class="t" style="left:1409.00px;top:424px;font-size:12px;line-height:16px;color:#000;transform:scaleX(0.8562);">CHIMIE  CLINI...</span><span class="t" style="left:1494.00px;top:425px;font-size:12px;line-height:16px;color:#000;transform:scaleX(0.8889);">PSA22222</span><span class="t" style="left:1579.00px;top:425px;font-size:12px;line-height:16px;color:#000;transform:scaleX(0.8989);">18</span><span class="t" style="left:1609.00px;top:424px;font-size:12px;line-height:16px;color:#000;transform:scaleX(0.9000);">mm</span><span class="t" style="left:1723.70px;top:425px;font-size:12px;line-height:16px;color:#000;transform:scaleX(0.8931);">Patho</span><span class="t" style="left:1808.70px;top:425px;font-size:12px;line-height:16px;color:#000;transform:scaleX(0.9513);">Excision</span><div style="left:1060px;top:720px;width:769px;height:291px;background:#fff;border:1px solid #82878f;box-sizing:border-box;"></div><div style="left:1061px;top:739px;width:767px;height:1px;background:#e6ecf4;"></div><div style="left:1082px;top:721px;width:1px;height:18px;background:#e2e8f1;"></div><div style="left:1351px;top:721px;width:1px;height:18px;background:#e2e8f1;"></div><div style="left:1413px;top:721px;width:1px;height:18px;background:#e2e8f1;"></div><div style="left:1476px;top:721px;width:1px;height:18px;background:#e2e8f1;"></div><div style="left:1539px;top:721px;width:1px;height:18px;background:#e2e8f1;"></div><div style="left:1807px;top:721px;width:1px;height:18px;background:#e2e8f1;"></div><span class="t" style="left:1089.00px;top:723px;font-size:12px;line-height:16px;color:#000;transform:scaleX(0.9082);">Nom</span><span class="t" style="left:1357.00px;top:723px;font-size:12px;line-height:16px;color:#000;transform:scaleX(0.9073);">Date</span><span class="t" style="left:1420.00px;top:722px;font-size:12px;line-height:16px;color:#000;transform:scaleX(0.9034);">Date de d</span><span class="t" style="left:1483.00px;top:722px;font-size:12px;line-height:16px;color:#000;transform:scaleX(0.8954);">Date de fi</span><span class="t" style="left:1546.00px;top:723px;font-size:12px;line-height:16px;color:#000;transform:scaleX(0.9029);">Remarques</span><div style="left:1837px;top:720px;width:73px;height:21px;border:1px solid #acacac;box-sizing:border-box;background:linear-gradient(#f0f0f0,#ebebeb 45%,#e3e3e3);"></div><span class="t" style="left:1851.50px;top:722px;font-size:12px;line-height:16px;color:#000;transform:scaleX(0.9162);">Nouveau</span><div style="left:1837px;top:749px;width:73px;height:21px;border:1px solid #acacac;box-sizing:border-box;background:linear-gradient(#f0f0f0,#ebebeb 45%,#e3e3e3);"></div><span class="t" style="left:1848.00px;top:751px;font-size:12px;line-height:16px;color:#000;transform:scaleX(0.9214);">Supprimer</span><div style="left:0px;top:1021px;width:1928px;height:19px;background:#f0f0f0;"></div><div style="left:0px;top:1026px;width:1920px;height:1px;background:#dcdcdc;"></div><div style="left:0px;top:1039px;width:1928px;height:1px;background:#d9d9d9;"></div><div style="left:0px;top:1040px;width:1928px;height:1px;background:#858585;"></div><div style="left:50px;top:1040px;width:62px;height:1px;background:#5a5a5a;"></div><div style="left:1715px;top:1026px;width:1px;height:11px;background:#c8c8c8;"></div><div style="left:1920px;top:0px;width:8px;height:1039px;background:#e9e9ee;"></div><div style="left:1920px;top:0px;width:1px;height:1039px;background:#d6d6de;"></div><div style="left:1921px;top:107px;width:5px;height:27px;background:#cbcddd;"></div><div style="left:1921px;top:139px;width:5px;height:103px;background:#cbcddd;"></div><div style="left:1921px;top:252px;width:5px;height:83px;background:#cbcddd;"></div><div style="left:1921px;top:338px;width:5px;height:107px;background:#cbcddd;"></div><div style="left:1921px;top:1017px;width:7px;height:23px;background:#1c7cd5;"></div><div style="left:1917px;top:1028px;width:1px;height:11px;background:#d2d2d2;"></div><span class="t" style="left:1923.00px;top:1022px;font-size:11px;line-height:14px;color:#fff;overflow:hidden;width:5px;">F</span>
</body></html>
